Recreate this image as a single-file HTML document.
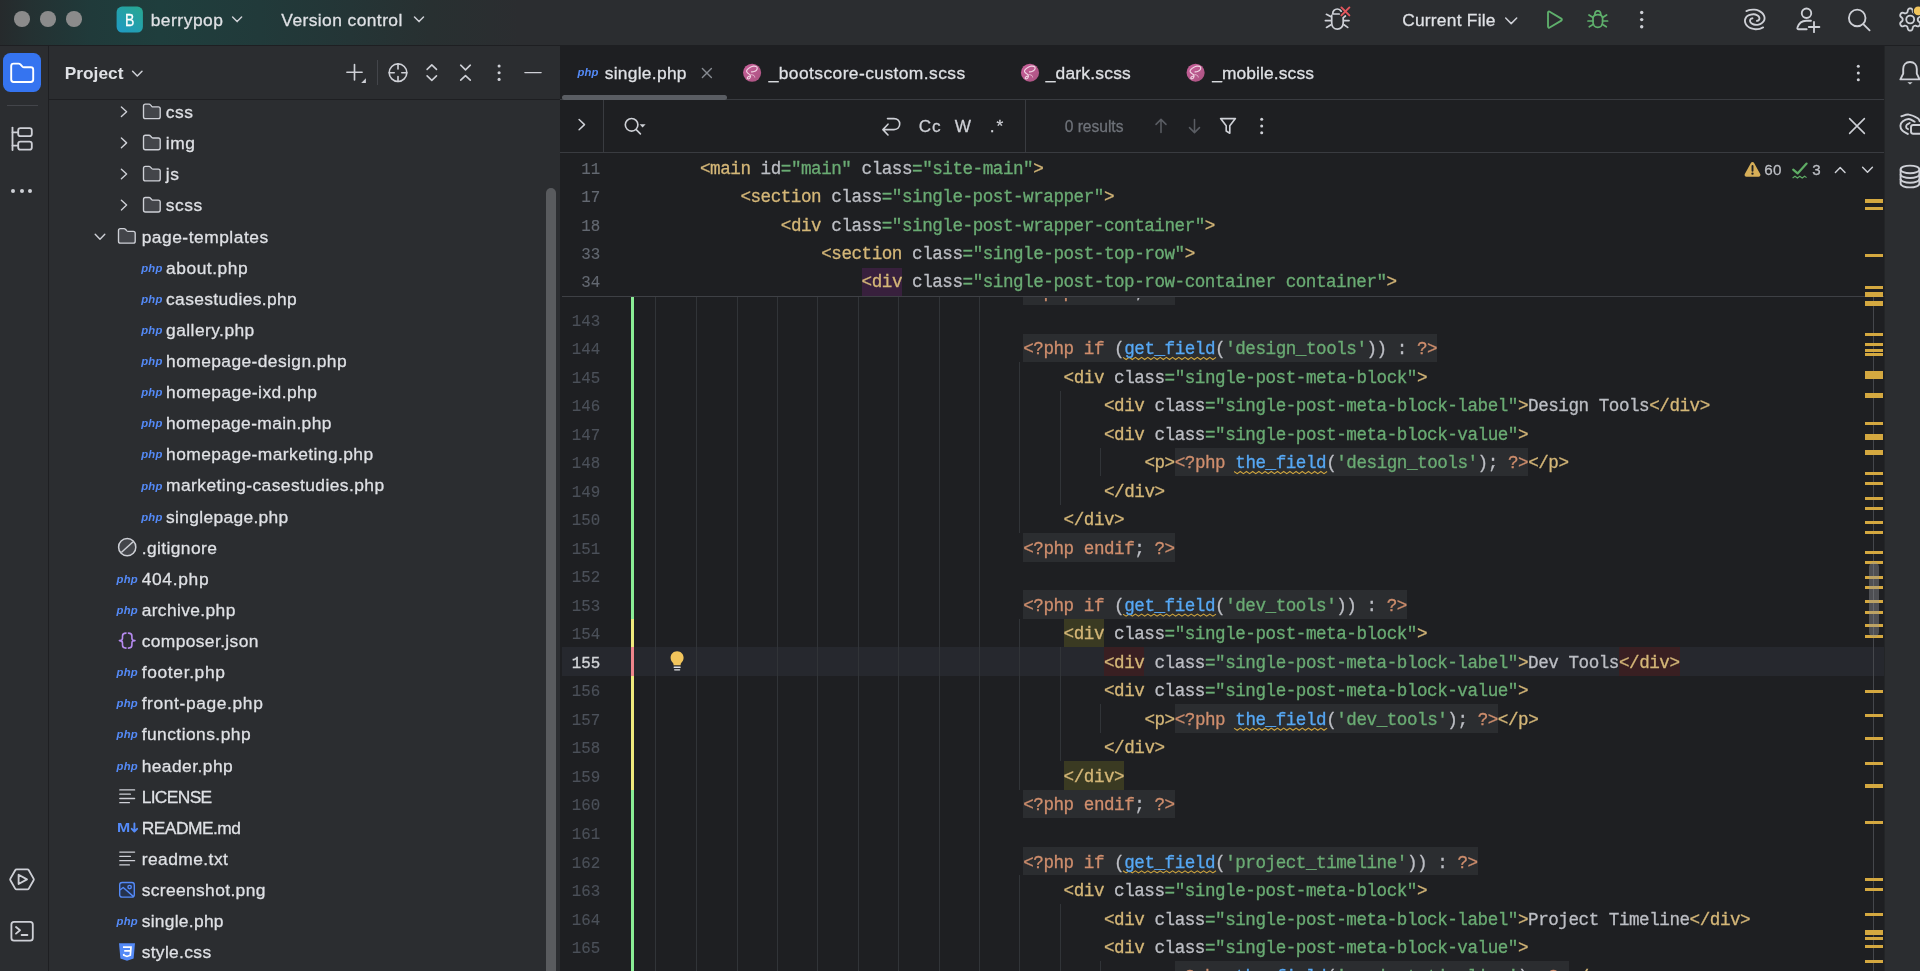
<!DOCTYPE html>
<html><head><meta charset="utf-8"><title>berrypop – single.php</title>
<style>
html,body{margin:0;padding:0;}
body{width:1920px;height:971px;overflow:hidden;background:#2b2d30;position:relative;font-family:"Liberation Sans",sans-serif;}
#root{position:absolute;left:0;top:0;width:1920px;height:971px;overflow:hidden;will-change:transform;}
.code span{white-space:pre}
</style></head><body><div id="root">
<div style="position:absolute;left:0px;top:0px;width:1920px;height:45px;background:#2b2d30;background-image:linear-gradient(90deg,#262a2c 0px,#243132 30px,#203a3a 90px,#1f3e3d 160px,#213a3a 260px,#243536 350px,#283031 430px,#2b2d30 520px);"></div>
<div style="position:absolute;left:0px;top:45px;width:1920px;height:1px;background:#1e1f22;"></div>
<div style="position:absolute;left:0px;top:46px;width:48px;height:925px;background:#2b2d30;"></div>
<div style="position:absolute;left:48px;top:46px;width:1px;height:925px;background:#1e1f22;"></div>
<div style="position:absolute;left:49px;top:46px;width:511px;height:925px;background:#2b2d30;"></div>
<div style="position:absolute;left:49px;top:99px;width:511px;height:1px;background:#1e1f22;"></div>
<div style="position:absolute;left:560px;top:46px;width:1324px;height:925px;background:#1e1f22;"></div>
<div style="position:absolute;left:1884px;top:46px;width:36px;height:925px;background:#2b2d30;"></div>
<div style="position:absolute;left:1884px;top:46px;width:1px;height:925px;background:#1e1f22;opacity:.6;"></div>
<div style="position:absolute;left:14.2px;top:11.399999999999999px;width:15.6px;height:15.6px;background:#8b8b8b;border-radius:50%;"></div>
<div style="position:absolute;left:40.0px;top:11.399999999999999px;width:15.6px;height:15.6px;background:#8b8b8b;border-radius:50%;"></div>
<div style="position:absolute;left:66.0px;top:11.399999999999999px;width:15.6px;height:15.6px;background:#8b8b8b;border-radius:50%;"></div>
<svg style="position:absolute;left:116px;top:6px;overflow:visible;" width="28" height="28" viewBox="0 0 28 28" fill="none"><g transform="translate(0.6 0.5)"><defs><linearGradient id="bg1" x1="0" y1="1" x2="0.8" y2="0"><stop offset="0" stop-color="#1f9ac6"/><stop offset="1" stop-color="#27a694"/></linearGradient></defs><rect x="0" y="0" width="26.3" height="26.1" rx="5.6" fill="url(#bg1)"/></g></svg>
<span style="position:absolute;left:125.27px;top:10.00px;line-height:21px;white-space:pre;font:normal normal 16.4px/21px 'Liberation Sans', sans-serif;color:#ffffff;-webkit-text-stroke:0.27px;transform:scaleX(.86);transform-origin:0 0;">B</span>
<span style="position:absolute;left:150.65px;top:9.00px;line-height:23px;white-space:pre;font:normal normal 17.4px/23px 'Liberation Sans', sans-serif;color:#dfe1e5;letter-spacing:0.531px;-webkit-text-stroke:0.27px;">berrypop</span>
<svg style="position:absolute;left:231px;top:16px;overflow:visible;" width="13" height="8" viewBox="0 0 13 8" fill="none"><g transform="translate(0.6 0.0)"><path d="M1 1 L5.5 5.6 L10 1" stroke="#ced0d6" stroke-width="1.5" stroke-linecap="round" stroke-linejoin="round"/></g></svg>
<span style="position:absolute;left:281.35px;top:9.00px;line-height:23px;white-space:pre;font:normal normal 17.4px/23px 'Liberation Sans', sans-serif;color:#dfe1e5;letter-spacing:0.423px;-webkit-text-stroke:0.27px;">Version control</span>
<svg style="position:absolute;left:413px;top:16px;overflow:visible;" width="13" height="8" viewBox="0 0 13 8" fill="none"><g transform="translate(0.5 0.0)"><path d="M1 1 L5.5 5.6 L10 1" stroke="#ced0d6" stroke-width="1.5" stroke-linecap="round" stroke-linejoin="round"/></g></svg>
<svg style="position:absolute;left:1323px;top:5px;overflow:visible;" width="31" height="28" viewBox="0 0 31 28" fill="none"><g transform="translate(0 0)"><g stroke="#ced0d6" stroke-width="1.73" stroke-linecap="round" fill="none"><path d="M8.7 10.4 V18 C8.7 21.6 11.2 24.1 14.4 24.1 C17.6 24.1 20.2 21.6 20.2 18 V13"/><path d="M9.7 9 C9.7 5.9 11.6 4 14.4 4 C16.2 4 17.4 4.8 18.2 6.2 M10.2 9 H16.2"/><path d="M3.4 9.3 L7.6 11.6 M2.4 15.6 H8.2 M3.5 22.4 L8 19.8 M21.2 15.6 H26 M21 19.8 L24.7 22.4 M20.4 12.6 L22.4 11"/></g><path d="M18.4 2.4 L26.4 10.4 M26.4 2.4 L18.4 10.4" stroke="#e5565d" stroke-width="1.9" stroke-linecap="round"/></g></svg>
<span style="position:absolute;left:1402.15px;top:9.00px;line-height:23px;white-space:pre;font:normal normal 17.4px/23px 'Liberation Sans', sans-serif;color:#dfe1e5;letter-spacing:0.229px;-webkit-text-stroke:0.27px;">Current File</span>
<svg style="position:absolute;left:1504px;top:17px;overflow:visible;" width="15" height="9" viewBox="0 0 15 9" fill="none"><g transform="translate(0.7 0.0)"><path d="M1 1 L6.5 6.6 L12 1" stroke="#ced0d6" stroke-width="1.5" stroke-linecap="round" stroke-linejoin="round"/></g></svg>
<svg style="position:absolute;left:1543px;top:8px;overflow:visible;" width="25" height="25" viewBox="0 0 25 25" fill="none"><g transform="translate(0 0)"><path d="M5 4.6 C5 3.7 5.9 3.2 6.7 3.7 L18.3 10.6 C19.1 11.1 19.1 12.1 18.3 12.6 L6.7 19.5 C5.9 20 5 19.5 5 18.6 Z" stroke="#5fb06c" stroke-width="1.83" stroke-linejoin="round"/></g></svg>
<svg style="position:absolute;left:1585px;top:7px;overflow:visible;" width="27" height="25" viewBox="0 0 27 25" fill="none"><g transform="translate(0 0)"><g stroke="#5fb06c" stroke-width="1.73" stroke-linecap="round" fill="none"><path d="M8 11.5 C8 8.8 10 7.6 12.8 7.6 C15.6 7.6 17.6 8.8 17.6 11.5 V15 C17.6 18.2 15.5 20.4 12.8 20.4 C10.1 20.4 8 18.2 8 15 Z"/><path d="M9.8 7.8 C9.8 5.3 11 3.8 12.8 3.8 C14.6 3.8 15.8 5.3 15.8 7.8"/><path d="M8 10.5 L4 8 M8 14 H3 M8.4 17.3 L4.3 19.8 M17.6 10.5 L21.6 8 M17.6 14 H22.6 M17.2 17.3 L21.3 19.8"/></g></g></svg>
<svg style="position:absolute;left:1638px;top:9px;overflow:visible;" width="8" height="22" viewBox="0 0 8 22" fill="none"><g transform="translate(0.7 0.5)"><circle cx="3" cy="3.0" r="1.7" fill="#ced0d6"/><circle cx="3" cy="10.1" r="1.7" fill="#ced0d6"/><circle cx="3" cy="17.2" r="1.7" fill="#ced0d6"/></g></svg>
<svg style="position:absolute;left:1742px;top:6px;overflow:visible;" width="29" height="29" viewBox="0 0 29 29" fill="none"><g transform="translate(0 0)"><g stroke="#ced0d6" stroke-width="1.85" stroke-linecap="round" fill="none"><path d="M4.33 5.02 C4.97 4.81 6.83 4.02 8.19 3.79 C9.56 3.56 11.13 3.50 12.52 3.63 C13.91 3.76 15.30 4.05 16.54 4.56 C17.77 5.08 19.00 5.85 19.93 6.72 C20.86 7.60 21.66 8.83 22.10 9.81 C22.54 10.79 22.61 11.71 22.56 12.59 C22.51 13.46 22.28 14.29 21.79 15.06 C21.30 15.83 20.49 16.64 19.62 17.23 C18.74 17.82 17.62 18.36 16.54 18.62 C15.46 18.88 14.17 18.90 13.14 18.77 C12.11 18.64 11.13 18.25 10.36 17.84 C9.59 17.43 8.89 16.87 8.50 16.30 C8.11 15.74 7.99 15.02 8.04 14.45 C8.09 13.88 8.40 13.26 8.81 12.90 C9.22 12.54 10.22 12.40 10.50 12.30"/><path d="M21.17 21.40 C20.60 21.63 19.06 22.48 17.77 22.79 C16.48 23.10 14.84 23.30 13.45 23.25 C12.06 23.20 10.67 22.92 9.43 22.48 C8.19 22.04 6.98 21.39 6.03 20.62 C5.08 19.85 4.24 18.82 3.72 17.84 C3.21 16.86 2.94 15.74 2.94 14.76 C2.94 13.78 3.26 12.79 3.72 11.97 C4.18 11.14 4.87 10.38 5.72 9.81 C6.57 9.25 7.78 8.84 8.81 8.58 C9.84 8.32 10.90 8.19 11.90 8.27 C12.91 8.35 14.02 8.65 14.84 9.04 C15.66 9.42 16.40 9.99 16.84 10.58 C17.28 11.17 17.51 11.97 17.46 12.59 C17.41 13.21 16.97 13.91 16.54 14.29 C16.11 14.67 15.17 14.76 14.90 14.85"/></g></g></svg>
<svg style="position:absolute;left:1794px;top:5px;overflow:visible;" width="29" height="31" viewBox="0 0 29 31" fill="none"><g transform="translate(0 0)"><g stroke="#ced0d6" stroke-width="1.83" stroke-linecap="round" stroke-linejoin="round" fill="none"><circle cx="12.5" cy="8.25" r="4.75"/><path d="M12.7 24.25 H4.6 C3.6 24.25 3 23.4 3.4 22.5 C4.8 18.6 8 15.75 12.2 15.75 H17"/><path d="M20 16.9 V27.2 M14.8 22 H25.4"/></g></g></svg>
<svg style="position:absolute;left:1845px;top:5px;overflow:visible;" width="29" height="29" viewBox="0 0 29 29" fill="none"><g transform="translate(0 0)"><g stroke="#ced0d6" stroke-width="1.83" stroke-linecap="round" fill="none"><circle cx="12.2" cy="12.95" r="8.3"/><path d="M18.3 19.1 L24.6 25.3"/></g></g></svg>
<svg style="position:absolute;left:1895px;top:4px;overflow:visible;" width="31" height="33" viewBox="0 0 31 33" fill="none"><g transform="translate(0 0)"><g stroke="#ced0d6" stroke-width="1.83" stroke-linejoin="round" fill="none"><circle cx="15.2" cy="15.5" r="3.95"/><path d="M22.75 15.50 C22.75 15.33 22.75 15.17 22.77 15.00 C22.80 14.83 22.80 14.67 22.89 14.49 C22.98 14.30 23.09 14.12 23.31 13.89 C23.52 13.66 23.90 13.38 24.18 13.09 C24.46 12.81 24.82 12.47 24.99 12.18 C25.16 11.89 25.20 11.61 25.22 11.35 C25.23 11.09 25.15 10.86 25.08 10.63 C25.00 10.40 24.89 10.18 24.77 9.98 C24.65 9.77 24.52 9.56 24.36 9.38 C24.19 9.20 24.03 9.02 23.80 8.90 C23.57 8.78 23.31 8.68 22.97 8.68 C22.63 8.69 22.16 8.82 21.78 8.92 C21.39 9.02 20.96 9.22 20.65 9.29 C20.34 9.36 20.13 9.36 19.92 9.34 C19.72 9.33 19.57 9.25 19.42 9.19 C19.26 9.13 19.12 9.04 18.98 8.96 C18.83 8.88 18.69 8.80 18.56 8.69 C18.42 8.59 18.29 8.50 18.17 8.33 C18.05 8.16 17.95 7.98 17.86 7.67 C17.76 7.37 17.71 6.90 17.61 6.52 C17.50 6.13 17.38 5.66 17.22 5.36 C17.05 5.07 16.83 4.89 16.62 4.75 C16.40 4.61 16.16 4.56 15.92 4.51 C15.68 4.46 15.44 4.45 15.20 4.45 C14.96 4.45 14.72 4.46 14.48 4.51 C14.24 4.56 14.00 4.61 13.78 4.75 C13.57 4.89 13.35 5.07 13.18 5.36 C13.02 5.66 12.90 6.13 12.79 6.52 C12.69 6.90 12.64 7.37 12.54 7.67 C12.45 7.98 12.35 8.16 12.23 8.33 C12.11 8.50 11.98 8.59 11.84 8.69 C11.71 8.80 11.57 8.88 11.43 8.96 C11.28 9.04 11.14 9.13 10.98 9.19 C10.83 9.25 10.68 9.33 10.48 9.34 C10.27 9.36 10.06 9.36 9.75 9.29 C9.44 9.22 9.01 9.02 8.62 8.92 C8.24 8.82 7.77 8.69 7.43 8.68 C7.09 8.68 6.83 8.78 6.60 8.90 C6.37 9.02 6.21 9.20 6.04 9.38 C5.88 9.56 5.75 9.77 5.63 9.98 C5.51 10.18 5.40 10.40 5.32 10.63 C5.25 10.86 5.17 11.09 5.18 11.35 C5.20 11.61 5.24 11.89 5.41 12.18 C5.58 12.47 5.94 12.81 6.22 13.09 C6.50 13.38 6.88 13.66 7.09 13.89 C7.31 14.12 7.42 14.30 7.51 14.49 C7.60 14.67 7.60 14.83 7.63 15.00 C7.65 15.17 7.65 15.33 7.65 15.50 C7.65 15.67 7.65 15.83 7.63 16.00 C7.60 16.17 7.60 16.33 7.51 16.51 C7.42 16.70 7.31 16.88 7.09 17.11 C6.88 17.34 6.50 17.62 6.22 17.91 C5.94 18.19 5.58 18.53 5.41 18.82 C5.24 19.11 5.20 19.39 5.18 19.65 C5.17 19.91 5.25 20.14 5.32 20.37 C5.40 20.60 5.51 20.82 5.63 21.02 C5.75 21.23 5.88 21.44 6.04 21.62 C6.21 21.80 6.37 21.98 6.60 22.10 C6.83 22.22 7.09 22.32 7.43 22.32 C7.77 22.31 8.24 22.18 8.62 22.08 C9.01 21.98 9.44 21.78 9.75 21.71 C10.06 21.64 10.27 21.64 10.48 21.66 C10.68 21.67 10.83 21.75 10.98 21.81 C11.14 21.87 11.28 21.96 11.42 22.04 C11.57 22.12 11.71 22.20 11.84 22.31 C11.98 22.41 12.11 22.50 12.23 22.67 C12.35 22.84 12.45 23.02 12.54 23.33 C12.64 23.63 12.69 24.10 12.79 24.48 C12.90 24.87 13.02 25.34 13.18 25.64 C13.35 25.93 13.57 26.11 13.78 26.25 C14.00 26.39 14.24 26.44 14.48 26.49 C14.72 26.54 14.96 26.55 15.20 26.55 C15.44 26.55 15.68 26.54 15.92 26.49 C16.16 26.44 16.40 26.39 16.62 26.25 C16.83 26.11 17.05 25.93 17.22 25.64 C17.38 25.34 17.50 24.87 17.61 24.48 C17.71 24.10 17.76 23.63 17.86 23.33 C17.95 23.02 18.05 22.84 18.17 22.67 C18.29 22.50 18.42 22.41 18.56 22.31 C18.69 22.20 18.83 22.12 18.98 22.04 C19.12 21.96 19.26 21.87 19.42 21.81 C19.57 21.75 19.72 21.67 19.92 21.66 C20.13 21.64 20.34 21.64 20.65 21.71 C20.96 21.78 21.39 21.98 21.78 22.08 C22.16 22.18 22.63 22.31 22.97 22.32 C23.31 22.32 23.57 22.22 23.80 22.10 C24.03 21.98 24.19 21.80 24.36 21.62 C24.52 21.44 24.65 21.23 24.77 21.03 C24.89 20.82 25.00 20.60 25.08 20.37 C25.15 20.14 25.23 19.91 25.22 19.65 C25.20 19.39 25.16 19.11 24.99 18.82 C24.82 18.53 24.46 18.19 24.18 17.91 C23.90 17.62 23.52 17.34 23.31 17.11 C23.09 16.88 22.98 16.70 22.89 16.51 C22.80 16.33 22.80 16.17 22.77 16.00 C22.75 15.83 22.75 15.67 22.75 15.50 Z"/></g><circle cx="23.2" cy="6.9" r="5.5" fill="#2b2d30"/><circle cx="23.2" cy="6.9" r="4.4" fill="#f2c55c"/></g></svg>
<div style="position:absolute;left:3px;top:53px;width:38px;height:39px;background:#3574f0;border-radius:7.5px;"></div>
<svg style="position:absolute;left:8px;top:60px;overflow:visible;" width="29" height="26" viewBox="0 0 29 26" fill="none"><g transform="translate(0 0)"><path d="M3.2 6 C3.2 4.6 4.2 3.6 5.6 3.6 H10.6 C11.3 3.6 11.9 3.9 12.4 4.4 L14.4 6.6 C14.8 7 15.4 7.3 16 7.3 H22.8 C24.2 7.3 25.2 8.3 25.2 9.7 V19.6 C25.2 21 24.2 22 22.8 22 H5.6 C4.2 22 3.2 21 3.2 19.6 Z" stroke="#ffffff" stroke-width="1.9" stroke-linejoin="round"/></g></svg>
<div style="position:absolute;left:7px;top:105px;width:31px;height:1px;background:#43454a;"></div>
<svg style="position:absolute;left:9px;top:125px;overflow:visible;" width="27" height="29" viewBox="0 0 27 29" fill="none"><g transform="translate(0 0)"><g stroke="#ced0d6" stroke-width="1.83" fill="none" stroke-linecap="round"><path d="M3.5 2.6 V25"/><rect x="9.2" y="3.2" width="13.6" height="8" rx="2.2"/><rect x="9.2" y="16.6" width="13.6" height="8" rx="2.2"/><path d="M3.5 7.3 H9 M3.5 20.6 H9"/></g></g></svg>
<div style="position:absolute;left:11.3px;top:188.9px;width:4px;height:4px;background:#ced0d6;border-radius:50%;"></div>
<div style="position:absolute;left:19.9px;top:188.9px;width:4px;height:4px;background:#ced0d6;border-radius:50%;"></div>
<div style="position:absolute;left:28.4px;top:188.9px;width:4px;height:4px;background:#ced0d6;border-radius:50%;"></div>
<svg style="position:absolute;left:7px;top:866px;overflow:visible;" width="31" height="28" viewBox="0 0 31 28" fill="none"><g transform="translate(0 0)"><g stroke="#ced0d6" stroke-width="1.83" stroke-linejoin="round" fill="none"><path d="M9.6 3.4 H20.4 C21 3.4 21.5 3.7 21.8 4.2 L26.6 12.6 C26.9 13.1 26.9 13.7 26.6 14.2 L21.8 22.6 C21.5 23.1 21 23.4 20.4 23.4 H9.6 C9 23.4 8.5 23.1 8.2 22.6 L3.4 14.2 C3.1 13.7 3.1 13.1 3.4 12.6 L8.2 4.2 C8.5 3.7 9 3.4 9.6 3.4 Z"/><path d="M11.6 8.8 V18 L20 13.4 Z"/></g></g></svg>
<svg style="position:absolute;left:8px;top:918px;overflow:visible;" width="29" height="27" viewBox="0 0 29 27" fill="none"><g transform="translate(0 0)"><g stroke="#ced0d6" stroke-width="1.83" stroke-linecap="round" stroke-linejoin="round" fill="none"><rect x="3.4" y="3.8" width="21.4" height="18.8" rx="2.6"/><path d="M8 9 L12 12.3 L8 15.6 M13.6 17 H19.4"/></g></g></svg>
<span style="position:absolute;left:64.65px;top:62.00px;line-height:22px;white-space:pre;font:normal bold 17.3px/22px 'Liberation Sans', sans-serif;color:#dfe1e5;letter-spacing:0.041px;">Project</span>
<svg style="position:absolute;left:131px;top:70px;overflow:visible;" width="13" height="8" viewBox="0 0 13 8" fill="none"><g transform="translate(0.6 0.2)"><path d="M1 1 L5.7 5.8 L10.4 1" stroke="#ced0d6" stroke-width="1.5" stroke-linecap="round" stroke-linejoin="round"/></g></svg>
<svg style="position:absolute;left:344px;top:62px;overflow:visible;" width="25" height="24" viewBox="0 0 25 24" fill="none"><g transform="translate(0 0)"><path d="M10.5 2.6 V17.9 M2.9 10.2 H18.1" stroke="#ced0d6" stroke-width="1.65" stroke-linecap="round"/><path d="M21.9 16.2 V20.9 H17.2 Z" fill="#ced0d6"/></g></svg>
<div style="position:absolute;left:377px;top:60px;width:1px;height:25px;background:#43454a;"></div>
<svg style="position:absolute;left:386px;top:60px;overflow:visible;" width="25" height="26" viewBox="0 0 25 26" fill="none"><g transform="translate(0 0.7)"><g stroke="#ced0d6" stroke-width="1.63" stroke-linecap="round" fill="none"><circle cx="12" cy="12" r="8.8"/><path d="M12 3.2 V8.2 M12 15.8 V20.8 M3.2 12 H8.2 M15.8 12 H20.8"/></g></g></svg>
<svg style="position:absolute;left:423px;top:62px;overflow:visible;" width="18" height="22" viewBox="0 0 18 22" fill="none"><g transform="translate(0 0)"><path d="M4.1 7.4 L8.8 2.9 L13.5 7.4 M4.1 13.9 L8.8 18.4 L13.5 13.9" stroke="#ced0d6" stroke-width="1.6" stroke-linecap="round" stroke-linejoin="round"/></g></svg>
<svg style="position:absolute;left:456px;top:62px;overflow:visible;" width="19" height="22" viewBox="0 0 19 22" fill="none"><g transform="translate(0.8 0)"><path d="M3.9 3.2 L8.7 7.8 L13.5 3.2 M3.9 18.2 L8.7 13.6 L13.5 18.2" stroke="#ced0d6" stroke-width="1.6" stroke-linecap="round" stroke-linejoin="round"/></g></svg>
<svg style="position:absolute;left:496px;top:63px;overflow:visible;" width="8" height="21" viewBox="0 0 8 21" fill="none"><g transform="translate(0.1 0.0)"><circle cx="3" cy="3.0" r="1.55" fill="#ced0d6"/><circle cx="3" cy="9.7" r="1.55" fill="#ced0d6"/><circle cx="3" cy="16.4" r="1.55" fill="#ced0d6"/></g></svg>
<svg style="position:absolute;left:523px;top:70px;overflow:visible;" width="21" height="6" viewBox="0 0 21 6" fill="none"><g transform="translate(0 0)"><path d="M1.9 2.6 H18.1" stroke="#ced0d6" stroke-width="1.45" stroke-linecap="round"/></g></svg>
<div style="position:absolute;left:560px;top:99px;width:1324px;height:1px;background:#393b40;"></div>
<div style="position:absolute;left:562px;top:94.7px;width:165px;height:5px;background:#5a5d63;border-radius:3px;"></div>
<span style="position:absolute;left:577.47px;top:65.00px;line-height:15px;white-space:pre;font:italic bold 11.3px/15px 'Liberation Sans', sans-serif;color:#548af7;letter-spacing:0.167px;">php</span>
<span style="position:absolute;left:604.65px;top:62.00px;line-height:23px;white-space:pre;font:normal normal 17.4px/23px 'Liberation Sans', sans-serif;color:#dfe1e5;letter-spacing:0.290px;-webkit-text-stroke:0.27px;">single.php</span>
<svg style="position:absolute;left:700px;top:66px;overflow:visible;" width="15" height="15" viewBox="0 0 15 15" fill="none"><g transform="translate(0 0)"><path d="M2.4 2.4 L11.4 11.4 M11.4 2.4 L2.4 11.4" stroke="#868a91" stroke-width="1.43" stroke-linecap="round"/></g></svg>
<svg style="position:absolute;left:742px;top:63px;overflow:visible;" width="21" height="21" viewBox="0 0 21 21" fill="none"><g transform="translate(0.6 0.25)"><defs><linearGradient id="sg752" x1="0" y1="0" x2="1" y2="1"><stop offset="0" stop-color="#c8609a"/><stop offset="1" stop-color="#aa5381"/></linearGradient></defs><circle cx="9.5" cy="9.5" r="9.05" fill="url(#sg752)"/><path d="M8.98 8.64 C9.39 8.59 10.63 8.64 11.45 8.33 C12.27 8.02 13.39 7.43 13.92 6.79 C14.45 6.15 14.69 5.10 14.60 4.50 C14.51 3.90 14.03 3.46 13.40 3.20 C12.77 2.94 11.77 2.80 10.83 2.93 C9.89 3.06 8.78 3.42 7.75 4.01 C6.72 4.60 5.28 5.76 4.66 6.48 C4.04 7.20 3.89 7.71 4.04 8.33 C4.20 8.95 4.97 9.56 5.59 10.18 C6.21 10.80 7.44 11.31 7.75 12.03 C8.06 12.75 7.80 13.88 7.44 14.50 C7.08 15.12 6.05 15.69 5.59 15.74 C5.13 15.79 4.61 15.22 4.66 14.81 C4.71 14.40 5.39 13.63 5.90 13.27 C6.42 12.91 7.44 12.75 7.75 12.65" stroke="#f1d6e4" stroke-width="1.15" stroke-linecap="round" fill="none"/><path d="M7.90 12.10 C8.08 11.99 8.39 11.38 8.98 11.42 C9.57 11.46 10.93 11.93 11.45 12.34 C11.96 12.75 11.97 13.63 12.07 13.89" stroke="#e6b9d0" stroke-width="1.0" stroke-linecap="round" fill="none"/></g></svg>
<span style="position:absolute;left:768.65px;top:62.00px;line-height:23px;white-space:pre;font:normal normal 17.4px/23px 'Liberation Sans', sans-serif;color:#dfe1e5;letter-spacing:0.426px;-webkit-text-stroke:0.27px;">_bootscore-custom.scss</span>
<svg style="position:absolute;left:1020px;top:63px;overflow:visible;" width="21" height="21" viewBox="0 0 21 21" fill="none"><g transform="translate(0.5 0.2)"><defs><linearGradient id="sg1030" x1="0" y1="0" x2="1" y2="1"><stop offset="0" stop-color="#c8609a"/><stop offset="1" stop-color="#aa5381"/></linearGradient></defs><circle cx="9.5" cy="9.5" r="9.05" fill="url(#sg1030)"/><path d="M8.98 8.64 C9.39 8.59 10.63 8.64 11.45 8.33 C12.27 8.02 13.39 7.43 13.92 6.79 C14.45 6.15 14.69 5.10 14.60 4.50 C14.51 3.90 14.03 3.46 13.40 3.20 C12.77 2.94 11.77 2.80 10.83 2.93 C9.89 3.06 8.78 3.42 7.75 4.01 C6.72 4.60 5.28 5.76 4.66 6.48 C4.04 7.20 3.89 7.71 4.04 8.33 C4.20 8.95 4.97 9.56 5.59 10.18 C6.21 10.80 7.44 11.31 7.75 12.03 C8.06 12.75 7.80 13.88 7.44 14.50 C7.08 15.12 6.05 15.69 5.59 15.74 C5.13 15.79 4.61 15.22 4.66 14.81 C4.71 14.40 5.39 13.63 5.90 13.27 C6.42 12.91 7.44 12.75 7.75 12.65" stroke="#f1d6e4" stroke-width="1.15" stroke-linecap="round" fill="none"/><path d="M7.90 12.10 C8.08 11.99 8.39 11.38 8.98 11.42 C9.57 11.46 10.93 11.93 11.45 12.34 C11.96 12.75 11.97 13.63 12.07 13.89" stroke="#e6b9d0" stroke-width="1.0" stroke-linecap="round" fill="none"/></g></svg>
<span style="position:absolute;left:1045.65px;top:62.00px;line-height:23px;white-space:pre;font:normal normal 17.4px/23px 'Liberation Sans', sans-serif;color:#dfe1e5;letter-spacing:0.227px;-webkit-text-stroke:0.27px;">_dark.scss</span>
<svg style="position:absolute;left:1186px;top:63px;overflow:visible;" width="21" height="21" viewBox="0 0 21 21" fill="none"><g transform="translate(0.1 0.2)"><defs><linearGradient id="sg1195" x1="0" y1="0" x2="1" y2="1"><stop offset="0" stop-color="#c8609a"/><stop offset="1" stop-color="#aa5381"/></linearGradient></defs><circle cx="9.5" cy="9.5" r="9.05" fill="url(#sg1195)"/><path d="M8.98 8.64 C9.39 8.59 10.63 8.64 11.45 8.33 C12.27 8.02 13.39 7.43 13.92 6.79 C14.45 6.15 14.69 5.10 14.60 4.50 C14.51 3.90 14.03 3.46 13.40 3.20 C12.77 2.94 11.77 2.80 10.83 2.93 C9.89 3.06 8.78 3.42 7.75 4.01 C6.72 4.60 5.28 5.76 4.66 6.48 C4.04 7.20 3.89 7.71 4.04 8.33 C4.20 8.95 4.97 9.56 5.59 10.18 C6.21 10.80 7.44 11.31 7.75 12.03 C8.06 12.75 7.80 13.88 7.44 14.50 C7.08 15.12 6.05 15.69 5.59 15.74 C5.13 15.79 4.61 15.22 4.66 14.81 C4.71 14.40 5.39 13.63 5.90 13.27 C6.42 12.91 7.44 12.75 7.75 12.65" stroke="#f1d6e4" stroke-width="1.15" stroke-linecap="round" fill="none"/><path d="M7.90 12.10 C8.08 11.99 8.39 11.38 8.98 11.42 C9.57 11.46 10.93 11.93 11.45 12.34 C11.96 12.75 11.97 13.63 12.07 13.89" stroke="#e6b9d0" stroke-width="1.0" stroke-linecap="round" fill="none"/></g></svg>
<span style="position:absolute;left:1212.15px;top:62.00px;line-height:23px;white-space:pre;font:normal normal 17.4px/23px 'Liberation Sans', sans-serif;color:#dfe1e5;letter-spacing:0.115px;-webkit-text-stroke:0.27px;">_mobile.scss</span>
<svg style="position:absolute;left:1855px;top:63px;overflow:visible;" width="8" height="21" viewBox="0 0 8 21" fill="none"><g transform="translate(0.3 0.3)"><circle cx="3" cy="3.0" r="1.5" fill="#ced0d6"/><circle cx="3" cy="9.7" r="1.5" fill="#ced0d6"/><circle cx="3" cy="16.4" r="1.5" fill="#ced0d6"/></g></svg>
<div style="position:absolute;left:560px;top:151.5px;width:1324px;height:1.2px;background:#393b40;"></div>
<svg style="position:absolute;left:578px;top:118px;overflow:visible;" width="9" height="14" viewBox="0 0 9 14" fill="none"><g transform="translate(0.1 0.5)"><path d="M1 1 L6.4 6.1 L1 11.2" stroke="#ced0d6" stroke-width="1.5" stroke-linecap="round" stroke-linejoin="round"/></g></svg>
<div style="position:absolute;left:603.3px;top:100px;width:1px;height:52px;background:#393b40;"></div>
<svg style="position:absolute;left:622px;top:116px;overflow:visible;" width="29" height="21" viewBox="0 0 29 21" fill="none"><g transform="translate(0 0)"><g stroke="#ced0d6" stroke-width="1.63" stroke-linecap="round" fill="none"><circle cx="9.6" cy="8.8" r="6.3"/><path d="M14.2 13.6 L18.4 17.8"/></g><path d="M17.6 8.2 H23.6 L20.6 11.6 Z" fill="#ced0d6"/></g></svg>
<svg style="position:absolute;left:880px;top:117px;overflow:visible;" width="24" height="22" viewBox="0 0 24 22" fill="none"><g transform="translate(0 0)"><path d="M7.5 1.6 H14 C17.5 1.6 19.7 4 19.7 7.1 C19.7 10.2 17.5 12.6 14 12.6 H3.4 M8 7.2 L2.9 12.6 L8 18" stroke="#ced0d6" stroke-width="1.6" stroke-linecap="round" stroke-linejoin="round"/></g></svg>
<span style="position:absolute;left:918.66px;top:115.00px;line-height:22px;white-space:pre;font:normal normal 17.2px/22px 'Liberation Sans', sans-serif;color:#ced0d6;letter-spacing:0.930px;-webkit-text-stroke:0.27px;">Cc</span>
<span style="position:absolute;left:954.66px;top:115.00px;line-height:22px;white-space:pre;font:normal normal 17.2px/22px 'Liberation Sans', sans-serif;color:#ced0d6;letter-spacing:1.842px;-webkit-text-stroke:0.27px;">W</span>
<span style="position:absolute;left:989.65px;top:115.00px;line-height:23px;white-space:pre;font:normal normal 17.4px/23px 'Liberation Sans', sans-serif;color:#ced0d6;letter-spacing:2.141px;-webkit-text-stroke:0.27px;">.*</span>
<div style="position:absolute;left:1025px;top:100px;width:1px;height:52px;background:#393b40;"></div>
<span style="position:absolute;left:1064.69px;top:117.00px;line-height:20px;white-space:pre;font:normal normal 15.6px/20px 'Liberation Sans', sans-serif;color:#6f737a;letter-spacing:-0.021px;-webkit-text-stroke:0.27px;">0 results</span>
<svg style="position:absolute;left:1154px;top:117px;overflow:visible;" width="15" height="19" viewBox="0 0 15 19" fill="none"><g transform="translate(0 0)"><path d="M7 15.6 V2.6 M2 7.4 L7 2.4 L12 7.4" stroke="#5a5d63" stroke-width="1.53" stroke-linecap="round" stroke-linejoin="round"/></g></svg>
<svg style="position:absolute;left:1187px;top:117px;overflow:visible;" width="16" height="19" viewBox="0 0 16 19" fill="none"><g transform="translate(0.5 0)"><path d="M7 2.4 V15.4 M2 10.6 L7 15.6 L12 10.6" stroke="#5a5d63" stroke-width="1.53" stroke-linecap="round" stroke-linejoin="round"/></g></svg>
<svg style="position:absolute;left:1218px;top:116px;overflow:visible;" width="21" height="21" viewBox="0 0 21 21" fill="none"><g transform="translate(0 0)"><path d="M2.6 2.6 H17.4 L11.8 9.8 V17.2 L8.2 15 V9.8 Z" stroke="#ced0d6" stroke-width="1.63" stroke-linejoin="round"/></g></svg>
<svg style="position:absolute;left:1258px;top:116px;overflow:visible;" width="8" height="21" viewBox="0 0 8 21" fill="none"><g transform="translate(0.7 0.3)"><circle cx="3" cy="3.0" r="1.5" fill="#ced0d6"/><circle cx="3" cy="9.7" r="1.5" fill="#ced0d6"/><circle cx="3" cy="16.4" r="1.5" fill="#ced0d6"/></g></svg>
<svg style="position:absolute;left:1847px;top:116px;overflow:visible;" width="21" height="21" viewBox="0 0 21 21" fill="none"><g transform="translate(0 0)"><path d="M2.6 2.6 L17.4 17.4 M17.4 2.6 L2.6 17.4" stroke="#ced0d6" stroke-width="1.53" stroke-linecap="round"/></g></svg>
<svg style="position:absolute;left:1897px;top:59px;overflow:visible;" width="27" height="29" viewBox="0 0 27 29" fill="none"><g transform="translate(0 0)"><g stroke="#ced0d6" stroke-width="1.9" stroke-linejoin="round" fill="none"><path d="M13 3 C8.6 3 6.2 6.2 6.2 10 V14.6 L3.4 20.4 H22.6 L19.8 14.6 V10 C19.8 6.2 17.4 3 13 3 Z"/></g><path d="M10.4 23.2 H15.6 L13 25.6 Z" fill="#ced0d6"/></g></svg>
<svg style="position:absolute;left:1897px;top:111px;overflow:visible;" width="27" height="29" viewBox="0 0 27 29" fill="none"><g transform="translate(0 0)"><g stroke="#ced0d6" stroke-width="1.9" stroke-linecap="round" fill="none"><path d="M4.40 5.30 C5.63 5.02 9.08 3.27 11.80 3.60 C14.52 3.93 18.88 6.18 20.70 7.30 C22.52 8.42 22.37 9.80 22.70 10.30"/><path d="M17.70 10.80 C16.72 10.33 13.77 8.08 11.80 8.00 C9.83 7.92 7.30 9.18 5.90 10.30 C4.50 11.42 3.48 13.13 3.40 14.70 C3.32 16.27 4.17 18.33 5.40 19.70 C6.63 21.07 9.90 22.37 10.80 22.90"/><path d="M12.80 12.00 C12.30 12.30 10.38 13.02 9.80 13.80 C9.22 14.58 9.05 15.97 9.30 16.70 C9.55 17.43 10.97 17.95 11.30 18.20"/></g><rect x="14" y="14" width="16" height="8.8" rx="2.2" fill="#2b2d30" stroke="#2b2d30" stroke-width="4.4"/><rect x="14" y="14" width="16" height="8.8" rx="2.2" fill="none" stroke="#ced0d6" stroke-width="1.9"/></g></svg>
<svg style="position:absolute;left:1897px;top:163px;overflow:visible;" width="27" height="29" viewBox="0 0 27 29" fill="none"><g transform="translate(0 0)"><g stroke="#ced0d6" stroke-width="1.9" fill="none"><ellipse cx="13" cy="6.4" rx="9.4" ry="3.8"/><path d="M3.6 6.4 V20.6 C3.6 22.7 7.8 24.4 13 24.4 C18.2 24.4 22.4 22.7 22.4 20.6 V6.4"/><path d="M3.6 11.2 C3.6 13.3 7.8 15 13 15 C18.2 15 22.4 13.3 22.4 11.2 M3.6 16 C3.6 18.1 7.8 19.8 13 19.8 C18.2 19.8 22.4 18.1 22.4 16"/></g></g></svg>
<svg style="position:absolute;left:120px;top:105px;overflow:visible;" width="9" height="14" viewBox="0 0 9 14" fill="none"><g transform="translate(0.4 0.95)"><path d="M1 1 L6.2 5.8 L1 10.6" stroke="#ced0d6" stroke-width="1.4" stroke-linecap="round" stroke-linejoin="round"/></g></svg>
<svg style="position:absolute;left:141px;top:102px;overflow:visible;" width="23" height="21" viewBox="0 0 23 21" fill="none"><g transform="translate(0.7 0.05)"><path d="M1.8 4 C1.8 2.9 2.6 2.1 3.7 2.1 H7.3 C7.9 2.1 8.4 2.3 8.8 2.8 L9.9 4.1 C10.3 4.5 10.8 4.8 11.4 4.8 H16.6 C17.7 4.8 18.5 5.6 18.5 6.7 V14.7 C18.5 15.8 17.7 16.6 16.6 16.6 H3.7 C2.6 16.6 1.8 15.8 1.8 14.7 Z" fill="#43454a" stroke="#ced0d6" stroke-width="1.35" stroke-linejoin="round"/></g></svg>
<span style="position:absolute;left:165.75px;top:101.00px;line-height:23px;white-space:pre;font:normal normal 17.4px/23px 'Liberation Sans', sans-serif;color:#dfe1e5;letter-spacing:0.566px;-webkit-text-stroke:0.27px;">css</span>
<svg style="position:absolute;left:120px;top:137px;overflow:visible;" width="9" height="13" viewBox="0 0 9 13" fill="none"><g transform="translate(0.4 0.065)"><path d="M1 1 L6.2 5.8 L1 10.6" stroke="#ced0d6" stroke-width="1.4" stroke-linecap="round" stroke-linejoin="round"/></g></svg>
<svg style="position:absolute;left:141px;top:133px;overflow:visible;" width="23" height="21" viewBox="0 0 23 21" fill="none"><g transform="translate(0.7 0.165)"><path d="M1.8 4 C1.8 2.9 2.6 2.1 3.7 2.1 H7.3 C7.9 2.1 8.4 2.3 8.8 2.8 L9.9 4.1 C10.3 4.5 10.8 4.8 11.4 4.8 H16.6 C17.7 4.8 18.5 5.6 18.5 6.7 V14.7 C18.5 15.8 17.7 16.6 16.6 16.6 H3.7 C2.6 16.6 1.8 15.8 1.8 14.7 Z" fill="#43454a" stroke="#ced0d6" stroke-width="1.35" stroke-linejoin="round"/></g></svg>
<span style="position:absolute;left:165.75px;top:132.00px;line-height:23px;white-space:pre;font:normal normal 17.4px/23px 'Liberation Sans', sans-serif;color:#dfe1e5;letter-spacing:0.520px;-webkit-text-stroke:0.27px;">img</span>
<svg style="position:absolute;left:120px;top:168px;overflow:visible;" width="9" height="13" viewBox="0 0 9 13" fill="none"><g transform="translate(0.4 0.18)"><path d="M1 1 L6.2 5.8 L1 10.6" stroke="#ced0d6" stroke-width="1.4" stroke-linecap="round" stroke-linejoin="round"/></g></svg>
<svg style="position:absolute;left:141px;top:164px;overflow:visible;" width="23" height="21" viewBox="0 0 23 21" fill="none"><g transform="translate(0.7 0.28)"><path d="M1.8 4 C1.8 2.9 2.6 2.1 3.7 2.1 H7.3 C7.9 2.1 8.4 2.3 8.8 2.8 L9.9 4.1 C10.3 4.5 10.8 4.8 11.4 4.8 H16.6 C17.7 4.8 18.5 5.6 18.5 6.7 V14.7 C18.5 15.8 17.7 16.6 16.6 16.6 H3.7 C2.6 16.6 1.8 15.8 1.8 14.7 Z" fill="#43454a" stroke="#ced0d6" stroke-width="1.35" stroke-linejoin="round"/></g></svg>
<span style="position:absolute;left:165.75px;top:163.00px;line-height:23px;white-space:pre;font:normal normal 17.4px/23px 'Liberation Sans', sans-serif;color:#dfe1e5;letter-spacing:0.615px;-webkit-text-stroke:0.27px;">js</span>
<svg style="position:absolute;left:120px;top:199px;overflow:visible;" width="9" height="13" viewBox="0 0 9 13" fill="none"><g transform="translate(0.4 0.295)"><path d="M1 1 L6.2 5.8 L1 10.6" stroke="#ced0d6" stroke-width="1.4" stroke-linecap="round" stroke-linejoin="round"/></g></svg>
<svg style="position:absolute;left:141px;top:195px;overflow:visible;" width="23" height="21" viewBox="0 0 23 21" fill="none"><g transform="translate(0.7 0.395)"><path d="M1.8 4 C1.8 2.9 2.6 2.1 3.7 2.1 H7.3 C7.9 2.1 8.4 2.3 8.8 2.8 L9.9 4.1 C10.3 4.5 10.8 4.8 11.4 4.8 H16.6 C17.7 4.8 18.5 5.6 18.5 6.7 V14.7 C18.5 15.8 17.7 16.6 16.6 16.6 H3.7 C2.6 16.6 1.8 15.8 1.8 14.7 Z" fill="#43454a" stroke="#ced0d6" stroke-width="1.35" stroke-linejoin="round"/></g></svg>
<span style="position:absolute;left:165.75px;top:194.00px;line-height:23px;white-space:pre;font:normal normal 17.4px/23px 'Liberation Sans', sans-serif;color:#dfe1e5;letter-spacing:0.528px;-webkit-text-stroke:0.27px;">scss</span>
<svg style="position:absolute;left:94px;top:233px;overflow:visible;" width="13" height="9" viewBox="0 0 13 9" fill="none"><g transform="translate(0.2 0.21)"><path d="M1 1 L5.8 6 L10.6 1" stroke="#ced0d6" stroke-width="1.4" stroke-linecap="round" stroke-linejoin="round"/></g></svg>
<svg style="position:absolute;left:116px;top:226px;overflow:visible;" width="23" height="21" viewBox="0 0 23 21" fill="none"><g transform="translate(0.7 0.51)"><path d="M1.8 4 C1.8 2.9 2.6 2.1 3.7 2.1 H7.3 C7.9 2.1 8.4 2.3 8.8 2.8 L9.9 4.1 C10.3 4.5 10.8 4.8 11.4 4.8 H16.6 C17.7 4.8 18.5 5.6 18.5 6.7 V14.7 C18.5 15.8 17.7 16.6 16.6 16.6 H3.7 C2.6 16.6 1.8 15.8 1.8 14.7 Z" fill="#43454a" stroke="#ced0d6" stroke-width="1.35" stroke-linejoin="round"/></g></svg>
<span style="position:absolute;left:141.65px;top:226.00px;line-height:23px;white-space:pre;font:normal normal 17.4px/23px 'Liberation Sans', sans-serif;color:#dfe1e5;letter-spacing:0.508px;-webkit-text-stroke:0.27px;">page-templates</span>
<span style="position:absolute;left:141.27px;top:261.00px;line-height:15px;white-space:pre;font:italic bold 11.3px/15px 'Liberation Sans', sans-serif;color:#548af7;letter-spacing:0.167px;">php</span>
<span style="position:absolute;left:166.05px;top:257.00px;line-height:23px;white-space:pre;font:normal normal 17.4px/23px 'Liberation Sans', sans-serif;color:#dfe1e5;letter-spacing:0.524px;-webkit-text-stroke:0.27px;">about.php</span>
<span style="position:absolute;left:141.27px;top:292.00px;line-height:15px;white-space:pre;font:italic bold 11.3px/15px 'Liberation Sans', sans-serif;color:#548af7;letter-spacing:0.167px;">php</span>
<span style="position:absolute;left:166.05px;top:288.00px;line-height:23px;white-space:pre;font:normal normal 17.4px/23px 'Liberation Sans', sans-serif;color:#dfe1e5;letter-spacing:0.360px;-webkit-text-stroke:0.27px;">casestudies.php</span>
<span style="position:absolute;left:141.27px;top:323.00px;line-height:15px;white-space:pre;font:italic bold 11.3px/15px 'Liberation Sans', sans-serif;color:#548af7;letter-spacing:0.167px;">php</span>
<span style="position:absolute;left:166.05px;top:319.00px;line-height:23px;white-space:pre;font:normal normal 17.4px/23px 'Liberation Sans', sans-serif;color:#dfe1e5;letter-spacing:0.445px;-webkit-text-stroke:0.27px;">gallery.php</span>
<span style="position:absolute;left:141.27px;top:354.00px;line-height:15px;white-space:pre;font:italic bold 11.3px/15px 'Liberation Sans', sans-serif;color:#548af7;letter-spacing:0.167px;">php</span>
<span style="position:absolute;left:166.05px;top:350.00px;line-height:23px;white-space:pre;font:normal normal 17.4px/23px 'Liberation Sans', sans-serif;color:#dfe1e5;letter-spacing:0.417px;-webkit-text-stroke:0.27px;">homepage-design.php</span>
<span style="position:absolute;left:141.27px;top:385.00px;line-height:15px;white-space:pre;font:italic bold 11.3px/15px 'Liberation Sans', sans-serif;color:#548af7;letter-spacing:0.167px;">php</span>
<span style="position:absolute;left:166.05px;top:381.00px;line-height:23px;white-space:pre;font:normal normal 17.4px/23px 'Liberation Sans', sans-serif;color:#dfe1e5;letter-spacing:0.452px;-webkit-text-stroke:0.27px;">homepage-ixd.php</span>
<span style="position:absolute;left:141.27px;top:416.00px;line-height:15px;white-space:pre;font:italic bold 11.3px/15px 'Liberation Sans', sans-serif;color:#548af7;letter-spacing:0.167px;">php</span>
<span style="position:absolute;left:166.05px;top:412.00px;line-height:23px;white-space:pre;font:normal normal 17.4px/23px 'Liberation Sans', sans-serif;color:#dfe1e5;letter-spacing:0.362px;-webkit-text-stroke:0.27px;">homepage-main.php</span>
<span style="position:absolute;left:141.27px;top:447.00px;line-height:15px;white-space:pre;font:italic bold 11.3px/15px 'Liberation Sans', sans-serif;color:#548af7;letter-spacing:0.167px;">php</span>
<span style="position:absolute;left:166.05px;top:443.00px;line-height:23px;white-space:pre;font:normal normal 17.4px/23px 'Liberation Sans', sans-serif;color:#dfe1e5;letter-spacing:0.423px;-webkit-text-stroke:0.27px;">homepage-marketing.php</span>
<span style="position:absolute;left:141.27px;top:479.00px;line-height:15px;white-space:pre;font:italic bold 11.3px/15px 'Liberation Sans', sans-serif;color:#548af7;letter-spacing:0.167px;">php</span>
<span style="position:absolute;left:166.05px;top:474.00px;line-height:23px;white-space:pre;font:normal normal 17.4px/23px 'Liberation Sans', sans-serif;color:#dfe1e5;letter-spacing:0.426px;-webkit-text-stroke:0.27px;">marketing-casestudies.php</span>
<span style="position:absolute;left:141.27px;top:510.00px;line-height:15px;white-space:pre;font:italic bold 11.3px/15px 'Liberation Sans', sans-serif;color:#548af7;letter-spacing:0.167px;">php</span>
<span style="position:absolute;left:166.05px;top:506.00px;line-height:23px;white-space:pre;font:normal normal 17.4px/23px 'Liberation Sans', sans-serif;color:#dfe1e5;letter-spacing:0.322px;-webkit-text-stroke:0.27px;">singlepage.php</span>
<svg style="position:absolute;left:117px;top:537px;overflow:visible;" width="22" height="22" viewBox="0 0 22 22" fill="none"><g transform="translate(0.2 0.16)"><g stroke="#ced0d6" stroke-width="1.5"><circle cx="10" cy="10" r="8.6" fill="#43454a"/><path d="M4.1 15.4 L15.9 4.6" fill="none"/></g></g></svg>
<span style="position:absolute;left:141.65px;top:537.00px;line-height:23px;white-space:pre;font:normal normal 17.4px/23px 'Liberation Sans', sans-serif;color:#dfe1e5;letter-spacing:0.415px;-webkit-text-stroke:0.27px;">.gitignore</span>
<span style="position:absolute;left:116.57px;top:572.00px;line-height:15px;white-space:pre;font:italic bold 11.3px/15px 'Liberation Sans', sans-serif;color:#548af7;letter-spacing:0.167px;">php</span>
<span style="position:absolute;left:141.65px;top:568.00px;line-height:23px;white-space:pre;font:normal normal 17.4px/23px 'Liberation Sans', sans-serif;color:#dfe1e5;letter-spacing:0.674px;-webkit-text-stroke:0.27px;">404.php</span>
<span style="position:absolute;left:116.57px;top:603.00px;line-height:15px;white-space:pre;font:italic bold 11.3px/15px 'Liberation Sans', sans-serif;color:#548af7;letter-spacing:0.167px;">php</span>
<span style="position:absolute;left:141.65px;top:599.00px;line-height:23px;white-space:pre;font:normal normal 17.4px/23px 'Liberation Sans', sans-serif;color:#dfe1e5;letter-spacing:0.379px;-webkit-text-stroke:0.27px;">archive.php</span>
<svg style="position:absolute;left:117px;top:631px;overflow:visible;" width="22" height="21" viewBox="0 0 22 21" fill="none"><g transform="translate(0.5 0.705)"><g stroke="#b68bf0" stroke-width="1.6" fill="none" stroke-linecap="round" stroke-linejoin="round"><path d="M8.5 1.4 C5.9 1.4 5 2.4 5 4.2 V6.6 C5 8 4.1 8.9 1.9 8.9 C4.1 8.9 5 9.8 5 11.2 V13.6 C5 15.4 5.9 16.4 8.5 16.4"/><path d="M10.9 1.4 C13.5 1.4 14.4 2.4 14.4 4.2 V6.6 C14.4 8 15.3 8.9 17.5 8.9 C15.3 8.9 14.4 9.8 14.4 11.2 V13.6 C14.4 15.4 13.5 16.4 10.9 16.4"/></g></g></svg>
<span style="position:absolute;left:141.65px;top:630.00px;line-height:23px;white-space:pre;font:normal normal 17.4px/23px 'Liberation Sans', sans-serif;color:#dfe1e5;letter-spacing:0.389px;-webkit-text-stroke:0.27px;">composer.json</span>
<span style="position:absolute;left:116.57px;top:665.00px;line-height:15px;white-space:pre;font:italic bold 11.3px/15px 'Liberation Sans', sans-serif;color:#548af7;letter-spacing:0.167px;">php</span>
<span style="position:absolute;left:141.65px;top:661.00px;line-height:23px;white-space:pre;font:normal normal 17.4px/23px 'Liberation Sans', sans-serif;color:#dfe1e5;letter-spacing:0.663px;-webkit-text-stroke:0.27px;">footer.php</span>
<span style="position:absolute;left:116.57px;top:696.00px;line-height:15px;white-space:pre;font:italic bold 11.3px/15px 'Liberation Sans', sans-serif;color:#548af7;letter-spacing:0.167px;">php</span>
<span style="position:absolute;left:141.65px;top:692.00px;line-height:23px;white-space:pre;font:normal normal 17.4px/23px 'Liberation Sans', sans-serif;color:#dfe1e5;letter-spacing:0.619px;-webkit-text-stroke:0.27px;">front-page.php</span>
<span style="position:absolute;left:116.57px;top:727.00px;line-height:15px;white-space:pre;font:italic bold 11.3px/15px 'Liberation Sans', sans-serif;color:#548af7;letter-spacing:0.167px;">php</span>
<span style="position:absolute;left:141.65px;top:723.00px;line-height:23px;white-space:pre;font:normal normal 17.4px/23px 'Liberation Sans', sans-serif;color:#dfe1e5;letter-spacing:0.457px;-webkit-text-stroke:0.27px;">functions.php</span>
<span style="position:absolute;left:116.57px;top:759.00px;line-height:15px;white-space:pre;font:italic bold 11.3px/15px 'Liberation Sans', sans-serif;color:#548af7;letter-spacing:0.167px;">php</span>
<span style="position:absolute;left:141.65px;top:755.00px;line-height:23px;white-space:pre;font:normal normal 17.4px/23px 'Liberation Sans', sans-serif;color:#dfe1e5;letter-spacing:0.445px;-webkit-text-stroke:0.27px;">header.php</span>
<svg style="position:absolute;left:119px;top:788px;overflow:visible;" width="18" height="18" viewBox="0 0 18 18" fill="none"><g transform="translate(0 0.28)"><path d="M0.8 1.6 H15.6 M0.8 5.9 H11.4 M0.8 10.2 H15.6 M0.8 14.4 H10.4" stroke="#ced0d6" stroke-width="1.3" stroke-linecap="round"/></g></svg>
<span style="position:absolute;left:141.65px;top:786.00px;line-height:23px;white-space:pre;font:normal normal 17.4px/23px 'Liberation Sans', sans-serif;color:#dfe1e5;letter-spacing:-0.647px;-webkit-text-stroke:0.27px;">LICENSE</span>
<span style="position:absolute;left:116.94px;top:819.00px;line-height:17px;white-space:pre;font:normal bold 13.2px/17px 'Liberation Sans', sans-serif;color:#548af7;transform:scaleX(1.2);transform-origin:0 0;">M</span>
<svg style="position:absolute;left:129px;top:821px;overflow:visible;" width="12" height="14" viewBox="0 0 12 14" fill="none"><g transform="translate(0.4 0.995)"><path d="M5 1.4 V9.4 M2.3 6.8 L5 9.6 L7.7 6.8" stroke="#548af7" stroke-width="1.9" stroke-linecap="round" stroke-linejoin="round" fill="none"/></g></svg>
<span style="position:absolute;left:141.65px;top:817.00px;line-height:23px;white-space:pre;font:normal normal 17.4px/23px 'Liberation Sans', sans-serif;color:#dfe1e5;letter-spacing:-0.502px;-webkit-text-stroke:0.27px;">README.md</span>
<svg style="position:absolute;left:119px;top:850px;overflow:visible;" width="18" height="18" viewBox="0 0 18 18" fill="none"><g transform="translate(0 0.51)"><path d="M0.8 1.6 H15.6 M0.8 5.9 H11.4 M0.8 10.2 H15.6 M0.8 14.4 H10.4" stroke="#ced0d6" stroke-width="1.3" stroke-linecap="round"/></g></svg>
<span style="position:absolute;left:141.65px;top:848.00px;line-height:23px;white-space:pre;font:normal normal 17.4px/23px 'Liberation Sans', sans-serif;color:#dfe1e5;letter-spacing:0.454px;-webkit-text-stroke:0.27px;">readme.txt</span>
<svg style="position:absolute;left:118px;top:880px;overflow:visible;" width="20" height="21" viewBox="0 0 20 21" fill="none"><g transform="translate(0 0.625)"><g stroke="#548af7" stroke-width="1.4" fill="none" stroke-linejoin="round"><rect x="1.7" y="1.9" width="14.6" height="14.6" rx="2.4" fill="#25324d"/><circle cx="11.6" cy="6.4" r="1.7"/><path d="M1.9 9.4 L5.2 6.8 L15.6 16"/></g></g></svg>
<span style="position:absolute;left:141.65px;top:879.00px;line-height:23px;white-space:pre;font:normal normal 17.4px/23px 'Liberation Sans', sans-serif;color:#dfe1e5;letter-spacing:0.369px;-webkit-text-stroke:0.27px;">screenshot.png</span>
<span style="position:absolute;left:116.57px;top:914.00px;line-height:15px;white-space:pre;font:italic bold 11.3px/15px 'Liberation Sans', sans-serif;color:#548af7;letter-spacing:0.167px;">php</span>
<span style="position:absolute;left:141.65px;top:910.00px;line-height:23px;white-space:pre;font:normal normal 17.4px/23px 'Liberation Sans', sans-serif;color:#dfe1e5;letter-spacing:0.290px;-webkit-text-stroke:0.27px;">single.php</span>
<svg style="position:absolute;left:118px;top:942px;overflow:visible;" width="19" height="21" viewBox="0 0 19 21" fill="none"><g transform="translate(0.0 0.455)"><path d="M1 0.8 H17 L15.6 16 L9 18.4 L2.4 16 Z" fill="#548af7"/><path d="M5 4.6 H13 L12.7 8.4 H6.2 M12.7 8.4 L12.3 12.8 L9 14 L5.8 12.8 L5.7 11.4" stroke="#ffffff" stroke-width="1.7" fill="none"/></g></svg>
<span style="position:absolute;left:141.65px;top:941.00px;line-height:23px;white-space:pre;font:normal normal 17.4px/23px 'Liberation Sans', sans-serif;color:#dfe1e5;letter-spacing:0.345px;-webkit-text-stroke:0.27px;">style.css</span>
<div style="position:absolute;left:545.8px;top:187.8px;width:10.3px;height:800px;background:#595b5e;border-radius:5.2px;"></div>
<div style="position:absolute;left:0;top:296px;width:1884px;height:675px;overflow:hidden;"><div style="position:absolute;left:0;top:-296px;width:1920px;height:971px;">
<div style="position:absolute;left:562px;top:647.24px;width:1322px;height:28.52px;background:#26282e;"></div>
<div style="position:absolute;left:655px;top:296px;width:1px;height:675px;background:#313438;"></div>
<div style="position:absolute;left:696px;top:296px;width:1px;height:675px;background:#313438;"></div>
<div style="position:absolute;left:737px;top:296px;width:1px;height:675px;background:#313438;"></div>
<div style="position:absolute;left:777px;top:296px;width:1px;height:675px;background:#313438;"></div>
<div style="position:absolute;left:817px;top:296px;width:1px;height:675px;background:#313438;"></div>
<div style="position:absolute;left:858px;top:296px;width:1px;height:675px;background:#313438;"></div>
<div style="position:absolute;left:898px;top:296px;width:1px;height:675px;background:#313438;"></div>
<div style="position:absolute;left:939px;top:296px;width:1px;height:675px;background:#313438;"></div>
<div style="position:absolute;left:979px;top:296px;width:1px;height:675px;background:#313438;"></div>
<div style="position:absolute;left:1019px;top:362.04px;width:1px;height:171.12px;background:#313438;"></div>
<div style="position:absolute;left:1060px;top:390.56px;width:1px;height:114.08px;background:#313438;"></div>
<div style="position:absolute;left:1100px;top:447.6px;width:1px;height:28.52px;background:#313438;"></div>
<div style="position:absolute;left:1019px;top:618.72px;width:1px;height:171.12px;background:#313438;"></div>
<div style="position:absolute;left:1060px;top:647.24px;width:1px;height:114.08px;background:#313438;"></div>
<div style="position:absolute;left:1100px;top:704.28px;width:1px;height:28.52px;background:#313438;"></div>
<div style="position:absolute;left:1019px;top:875.4px;width:1px;height:142.6px;background:#313438;"></div>
<div style="position:absolute;left:1060px;top:903.92px;width:1px;height:114.08px;background:#313438;"></div>
<div style="position:absolute;left:1100px;top:960.96px;width:1px;height:28.52px;background:#313438;"></div>
<div style="position:absolute;left:631px;top:296px;width:3.3px;height:322.72px;background:#8aec95;"></div>
<div style="position:absolute;left:631px;top:618.72px;width:3.3px;height:28.52px;background:#efe97c;"></div>
<div style="position:absolute;left:631px;top:647.24px;width:3.3px;height:28.52px;background:#ef858b;"></div>
<div style="position:absolute;left:631px;top:675.76px;width:3.3px;height:114.08px;background:#efe97c;"></div>
<div style="position:absolute;left:631px;top:789.8399999999999px;width:3.3px;height:181.16000000000008px;background:#8aec95;"></div>
<div style="position:absolute;left:1023.2px;top:276.48px;width:151.5px;height:28.52px;background:#2b2d30;"></div>
<div style="position:absolute;left:0;top:297.9px;width:1884px;height:20px;overflow:hidden;"><div style="position:absolute;left:0;top:-297.9px;width:1884px;height:971px;">
<div style="position:absolute;left:1023.2px;top:276.48px;width:151.5px;height:28.52px;background:#2b2d30;"></div>
<div class="code" style="position:absolute;left:1023.20px;top:278.00px;height:28.52px;white-space:pre;-webkit-text-stroke:0.3px;font:17.6px/28.52px 'Liberation Mono', monospace;letter-spacing:-0.462px;"><span style="color:#cf8e6d">&lt;?php</span><span style="color:#bcbec4"> </span><span style="color:#cf8e6d">endif</span><span style="color:#bcbec4">; </span><span style="color:#cf8e6d">?&gt;</span></div>
</div></div>
<div style="position:absolute;left:540px;width:60.30px;top:308.00px;height:28.52px;text-align:right;white-space:pre;font:normal 15.8px/29.72px 'Liberation Mono', monospace;color:#4b5059;-webkit-text-stroke:0.15px;">143</div>
<div style="position:absolute;left:1023.2px;top:333.52px;width:414.1px;height:28.52px;background:#2b2d30;"></div>
<svg style="position:absolute;left:1123px;top:356px;overflow:visible;" width="94" height="6" viewBox="0 0 94 6" fill="none"><g transform="translate(0.0 0.42)"><path d="M0 1.0 L3.10 3.1 L6.20 1.0 L9.30 3.1 L12.40 1.0 L15.50 3.1 L18.60 1.0 L21.70 3.1 L24.80 1.0 L27.90 3.1 L31.00 1.0 L34.10 3.1 L37.20 1.0 L40.30 3.1 L43.40 1.0 L46.50 3.1 L49.60 1.0 L52.70 3.1 L55.80 1.0 L58.90 3.1 L62.00 1.0 L65.10 3.1 L68.20 1.0 L71.30 3.1 L74.40 1.0 L77.50 3.1 L80.60 1.0 L83.70 3.1 L86.80 1.0 L89.90 3.1 L93.00 1.0" stroke="#cfa53e" stroke-width="1.05" fill="none" stroke-linejoin="miter"/></g></svg>
<div class="code" style="position:absolute;left:1023.20px;top:335.00px;height:28.52px;white-space:pre;-webkit-text-stroke:0.3px;font:17.6px/28.52px 'Liberation Mono', monospace;letter-spacing:-0.462px;"><span style="color:#cf8e6d">&lt;?php</span><span style="color:#bcbec4"> </span><span style="color:#cf8e6d">if</span><span style="color:#bcbec4"> (</span><span style="color:#56a8f5">get_field</span><span style="color:#bcbec4">(</span><span style="color:#6aab73">&#x27;design_tools&#x27;</span><span style="color:#bcbec4">))</span><span style="color:#bcbec4"> : </span><span style="color:#cf8e6d">?&gt;</span></div>
<div style="position:absolute;left:540px;width:60.30px;top:336.00px;height:28.52px;text-align:right;white-space:pre;font:normal 15.8px/29.72px 'Liberation Mono', monospace;color:#4b5059;-webkit-text-stroke:0.15px;">144</div>
<div class="code" style="position:absolute;left:1063.60px;top:364.00px;height:28.52px;white-space:pre;-webkit-text-stroke:0.3px;font:17.6px/28.52px 'Liberation Mono', monospace;letter-spacing:-0.462px;"><span style="color:#d5b778">&lt;div</span><span style="color:#bcbec4"> class</span><span style="color:#6aab73">=&quot;single-post-meta-block&quot;</span><span style="color:#d5b778">&gt;</span></div>
<div style="position:absolute;left:540px;width:60.30px;top:365.00px;height:28.52px;text-align:right;white-space:pre;font:normal 15.8px/29.72px 'Liberation Mono', monospace;color:#4b5059;-webkit-text-stroke:0.15px;">145</div>
<div class="code" style="position:absolute;left:1104.00px;top:392.00px;height:28.52px;white-space:pre;-webkit-text-stroke:0.3px;font:17.6px/28.52px 'Liberation Mono', monospace;letter-spacing:-0.462px;"><span style="color:#d5b778">&lt;div</span><span style="color:#bcbec4"> class</span><span style="color:#6aab73">=&quot;single-post-meta-block-label&quot;</span><span style="color:#d5b778">&gt;</span><span style="color:#bcbec4">Design Tools</span><span style="color:#d5b778">&lt;/div&gt;</span></div>
<div style="position:absolute;left:540px;width:60.30px;top:393.00px;height:28.52px;text-align:right;white-space:pre;font:normal 15.8px/29.72px 'Liberation Mono', monospace;color:#4b5059;-webkit-text-stroke:0.15px;">146</div>
<div class="code" style="position:absolute;left:1104.00px;top:421.00px;height:28.52px;white-space:pre;-webkit-text-stroke:0.3px;font:17.6px/28.52px 'Liberation Mono', monospace;letter-spacing:-0.462px;"><span style="color:#d5b778">&lt;div</span><span style="color:#bcbec4"> class</span><span style="color:#6aab73">=&quot;single-post-meta-block-value&quot;</span><span style="color:#d5b778">&gt;</span></div>
<div style="position:absolute;left:540px;width:60.30px;top:422.00px;height:28.52px;text-align:right;white-space:pre;font:normal 15.8px/29.72px 'Liberation Mono', monospace;color:#4b5059;-webkit-text-stroke:0.15px;">147</div>
<div style="position:absolute;left:1174.7px;top:447.6px;width:353.5px;height:28.52px;background:#2b2d30;"></div>
<svg style="position:absolute;left:1234px;top:470px;overflow:visible;" width="94" height="6" viewBox="0 0 94 6" fill="none"><g transform="translate(0.1 0.5)"><path d="M0 1.0 L3.10 3.1 L6.20 1.0 L9.30 3.1 L12.40 1.0 L15.50 3.1 L18.60 1.0 L21.70 3.1 L24.80 1.0 L27.90 3.1 L31.00 1.0 L34.10 3.1 L37.20 1.0 L40.30 3.1 L43.40 1.0 L46.50 3.1 L49.60 1.0 L52.70 3.1 L55.80 1.0 L58.90 3.1 L62.00 1.0 L65.10 3.1 L68.20 1.0 L71.30 3.1 L74.40 1.0 L77.50 3.1 L80.60 1.0 L83.70 3.1 L86.80 1.0 L89.90 3.1 L93.00 1.0" stroke="#cfa53e" stroke-width="1.05" fill="none" stroke-linejoin="miter"/></g></svg>
<div class="code" style="position:absolute;left:1144.40px;top:449.00px;height:28.52px;white-space:pre;-webkit-text-stroke:0.3px;font:17.6px/28.52px 'Liberation Mono', monospace;letter-spacing:-0.462px;"><span style="color:#d5b778">&lt;p&gt;</span><span style="color:#cf8e6d">&lt;?php</span><span style="color:#bcbec4"> </span><span style="color:#56a8f5">the_field</span><span style="color:#bcbec4">(</span><span style="color:#6aab73">&#x27;design_tools&#x27;</span><span style="color:#bcbec4">)</span><span style="color:#bcbec4">; </span><span style="color:#cf8e6d">?&gt;</span><span style="color:#d5b778">&lt;/p&gt;</span></div>
<div style="position:absolute;left:540px;width:60.30px;top:450.00px;height:28.52px;text-align:right;white-space:pre;font:normal 15.8px/29.72px 'Liberation Mono', monospace;color:#4b5059;-webkit-text-stroke:0.15px;">148</div>
<div class="code" style="position:absolute;left:1104.00px;top:478.00px;height:28.52px;white-space:pre;-webkit-text-stroke:0.3px;font:17.6px/28.52px 'Liberation Mono', monospace;letter-spacing:-0.462px;"><span style="color:#d5b778">&lt;/div&gt;</span></div>
<div style="position:absolute;left:540px;width:60.30px;top:479.00px;height:28.52px;text-align:right;white-space:pre;font:normal 15.8px/29.72px 'Liberation Mono', monospace;color:#4b5059;-webkit-text-stroke:0.15px;">149</div>
<div class="code" style="position:absolute;left:1063.60px;top:506.00px;height:28.52px;white-space:pre;-webkit-text-stroke:0.3px;font:17.6px/28.52px 'Liberation Mono', monospace;letter-spacing:-0.462px;"><span style="color:#d5b778">&lt;/div&gt;</span></div>
<div style="position:absolute;left:540px;width:60.30px;top:507.00px;height:28.52px;text-align:right;white-space:pre;font:normal 15.8px/29.72px 'Liberation Mono', monospace;color:#4b5059;-webkit-text-stroke:0.15px;">150</div>
<div style="position:absolute;left:1023.2px;top:533.16px;width:151.5px;height:28.52px;background:#2b2d30;"></div>
<div class="code" style="position:absolute;left:1023.20px;top:535.00px;height:28.52px;white-space:pre;-webkit-text-stroke:0.3px;font:17.6px/28.52px 'Liberation Mono', monospace;letter-spacing:-0.462px;"><span style="color:#cf8e6d">&lt;?php</span><span style="color:#bcbec4"> </span><span style="color:#cf8e6d">endif</span><span style="color:#bcbec4">; </span><span style="color:#cf8e6d">?&gt;</span></div>
<div style="position:absolute;left:540px;width:60.30px;top:536.00px;height:28.52px;text-align:right;white-space:pre;font:normal 15.8px/29.72px 'Liberation Mono', monospace;color:#4b5059;-webkit-text-stroke:0.15px;">151</div>
<div style="position:absolute;left:540px;width:60.30px;top:564.00px;height:28.52px;text-align:right;white-space:pre;font:normal 15.8px/29.72px 'Liberation Mono', monospace;color:#4b5059;-webkit-text-stroke:0.15px;">152</div>
<div style="position:absolute;left:1023.2px;top:590.2px;width:383.8px;height:28.52px;background:#2b2d30;"></div>
<svg style="position:absolute;left:1123px;top:613px;overflow:visible;" width="94" height="6" viewBox="0 0 94 6" fill="none"><g transform="translate(0.0 0.1)"><path d="M0 1.0 L3.10 3.1 L6.20 1.0 L9.30 3.1 L12.40 1.0 L15.50 3.1 L18.60 1.0 L21.70 3.1 L24.80 1.0 L27.90 3.1 L31.00 1.0 L34.10 3.1 L37.20 1.0 L40.30 3.1 L43.40 1.0 L46.50 3.1 L49.60 1.0 L52.70 3.1 L55.80 1.0 L58.90 3.1 L62.00 1.0 L65.10 3.1 L68.20 1.0 L71.30 3.1 L74.40 1.0 L77.50 3.1 L80.60 1.0 L83.70 3.1 L86.80 1.0 L89.90 3.1 L93.00 1.0" stroke="#cfa53e" stroke-width="1.05" fill="none" stroke-linejoin="miter"/></g></svg>
<div class="code" style="position:absolute;left:1023.20px;top:592.00px;height:28.52px;white-space:pre;-webkit-text-stroke:0.3px;font:17.6px/28.52px 'Liberation Mono', monospace;letter-spacing:-0.462px;"><span style="color:#cf8e6d">&lt;?php</span><span style="color:#bcbec4"> </span><span style="color:#cf8e6d">if</span><span style="color:#bcbec4"> (</span><span style="color:#56a8f5">get_field</span><span style="color:#bcbec4">(</span><span style="color:#6aab73">&#x27;dev_tools&#x27;</span><span style="color:#bcbec4">))</span><span style="color:#bcbec4"> : </span><span style="color:#cf8e6d">?&gt;</span></div>
<div style="position:absolute;left:540px;width:60.30px;top:593.00px;height:28.52px;text-align:right;white-space:pre;font:normal 15.8px/29.72px 'Liberation Mono', monospace;color:#4b5059;-webkit-text-stroke:0.15px;">153</div>
<div style="position:absolute;left:1063.6px;top:618.72px;width:40.4px;height:28.52px;background:#3a3a22;"></div>
<div class="code" style="position:absolute;left:1063.60px;top:620.00px;height:28.52px;white-space:pre;-webkit-text-stroke:0.3px;font:17.6px/28.52px 'Liberation Mono', monospace;letter-spacing:-0.462px;"><span style="color:#d5b778">&lt;div</span><span style="color:#bcbec4"> class</span><span style="color:#6aab73">=&quot;single-post-meta-block&quot;</span><span style="color:#d5b778">&gt;</span></div>
<div style="position:absolute;left:540px;width:60.30px;top:621.00px;height:28.52px;text-align:right;white-space:pre;font:normal 15.8px/29.72px 'Liberation Mono', monospace;color:#4b5059;-webkit-text-stroke:0.15px;">154</div>
<div style="position:absolute;left:1104.0px;top:647.24px;width:40.4px;height:28.52px;background:#391f22;"></div>
<div style="position:absolute;left:1619.1px;top:647.24px;width:60.6px;height:28.52px;background:#391f22;"></div>
<div class="code" style="position:absolute;left:1104.00px;top:649.00px;height:28.52px;white-space:pre;-webkit-text-stroke:0.3px;font:17.6px/28.52px 'Liberation Mono', monospace;letter-spacing:-0.462px;"><span style="color:#d5b778">&lt;div</span><span style="color:#bcbec4"> class</span><span style="color:#6aab73">=&quot;single-post-meta-block-label&quot;</span><span style="color:#d5b778">&gt;</span><span style="color:#bcbec4">Dev Tools</span><span style="color:#d5b778">&lt;/div&gt;</span></div>
<div style="position:absolute;left:540px;width:60.30px;top:650.00px;height:28.52px;text-align:right;white-space:pre;font:normal 15.8px/29.72px 'Liberation Mono', monospace;color:#d3d5d9;-webkit-text-stroke:0.35px;">155</div>
<div class="code" style="position:absolute;left:1104.00px;top:677.00px;height:28.52px;white-space:pre;-webkit-text-stroke:0.3px;font:17.6px/28.52px 'Liberation Mono', monospace;letter-spacing:-0.462px;"><span style="color:#d5b778">&lt;div</span><span style="color:#bcbec4"> class</span><span style="color:#6aab73">=&quot;single-post-meta-block-value&quot;</span><span style="color:#d5b778">&gt;</span></div>
<div style="position:absolute;left:540px;width:60.30px;top:678.00px;height:28.52px;text-align:right;white-space:pre;font:normal 15.8px/29.72px 'Liberation Mono', monospace;color:#4b5059;-webkit-text-stroke:0.15px;">156</div>
<div style="position:absolute;left:1174.7px;top:704.28px;width:323.2px;height:28.52px;background:#2b2d30;"></div>
<svg style="position:absolute;left:1234px;top:727px;overflow:visible;" width="94" height="6" viewBox="0 0 94 6" fill="none"><g transform="translate(0.1 0.18)"><path d="M0 1.0 L3.10 3.1 L6.20 1.0 L9.30 3.1 L12.40 1.0 L15.50 3.1 L18.60 1.0 L21.70 3.1 L24.80 1.0 L27.90 3.1 L31.00 1.0 L34.10 3.1 L37.20 1.0 L40.30 3.1 L43.40 1.0 L46.50 3.1 L49.60 1.0 L52.70 3.1 L55.80 1.0 L58.90 3.1 L62.00 1.0 L65.10 3.1 L68.20 1.0 L71.30 3.1 L74.40 1.0 L77.50 3.1 L80.60 1.0 L83.70 3.1 L86.80 1.0 L89.90 3.1 L93.00 1.0" stroke="#cfa53e" stroke-width="1.05" fill="none" stroke-linejoin="miter"/></g></svg>
<div class="code" style="position:absolute;left:1144.40px;top:706.00px;height:28.52px;white-space:pre;-webkit-text-stroke:0.3px;font:17.6px/28.52px 'Liberation Mono', monospace;letter-spacing:-0.462px;"><span style="color:#d5b778">&lt;p&gt;</span><span style="color:#cf8e6d">&lt;?php</span><span style="color:#bcbec4"> </span><span style="color:#56a8f5">the_field</span><span style="color:#bcbec4">(</span><span style="color:#6aab73">&#x27;dev_tools&#x27;</span><span style="color:#bcbec4">)</span><span style="color:#bcbec4">; </span><span style="color:#cf8e6d">?&gt;</span><span style="color:#d5b778">&lt;/p&gt;</span></div>
<div style="position:absolute;left:540px;width:60.30px;top:707.00px;height:28.52px;text-align:right;white-space:pre;font:normal 15.8px/29.72px 'Liberation Mono', monospace;color:#4b5059;-webkit-text-stroke:0.15px;">157</div>
<div class="code" style="position:absolute;left:1104.00px;top:734.00px;height:28.52px;white-space:pre;-webkit-text-stroke:0.3px;font:17.6px/28.52px 'Liberation Mono', monospace;letter-spacing:-0.462px;"><span style="color:#d5b778">&lt;/div&gt;</span></div>
<div style="position:absolute;left:540px;width:60.30px;top:735.00px;height:28.52px;text-align:right;white-space:pre;font:normal 15.8px/29.72px 'Liberation Mono', monospace;color:#4b5059;-webkit-text-stroke:0.15px;">158</div>
<div style="position:absolute;left:1063.6px;top:761.32px;width:60.6px;height:28.52px;background:#3a3a22;"></div>
<div class="code" style="position:absolute;left:1063.60px;top:763.00px;height:28.52px;white-space:pre;-webkit-text-stroke:0.3px;font:17.6px/28.52px 'Liberation Mono', monospace;letter-spacing:-0.462px;"><span style="color:#d5b778">&lt;/div&gt;</span></div>
<div style="position:absolute;left:540px;width:60.30px;top:764.00px;height:28.52px;text-align:right;white-space:pre;font:normal 15.8px/29.72px 'Liberation Mono', monospace;color:#4b5059;-webkit-text-stroke:0.15px;">159</div>
<div style="position:absolute;left:1023.2px;top:789.84px;width:151.5px;height:28.52px;background:#2b2d30;"></div>
<div class="code" style="position:absolute;left:1023.20px;top:791.00px;height:28.52px;white-space:pre;-webkit-text-stroke:0.3px;font:17.6px/28.52px 'Liberation Mono', monospace;letter-spacing:-0.462px;"><span style="color:#cf8e6d">&lt;?php</span><span style="color:#bcbec4"> </span><span style="color:#cf8e6d">endif</span><span style="color:#bcbec4">; </span><span style="color:#cf8e6d">?&gt;</span></div>
<div style="position:absolute;left:540px;width:60.30px;top:792.00px;height:28.52px;text-align:right;white-space:pre;font:normal 15.8px/29.72px 'Liberation Mono', monospace;color:#4b5059;-webkit-text-stroke:0.15px;">160</div>
<div style="position:absolute;left:540px;width:60.30px;top:821.00px;height:28.52px;text-align:right;white-space:pre;font:normal 15.8px/29.72px 'Liberation Mono', monospace;color:#4b5059;-webkit-text-stroke:0.15px;">161</div>
<div style="position:absolute;left:1023.2px;top:846.88px;width:454.5px;height:28.52px;background:#2b2d30;"></div>
<svg style="position:absolute;left:1123px;top:869px;overflow:visible;" width="94" height="7" viewBox="0 0 94 7" fill="none"><g transform="translate(0.0 0.78)"><path d="M0 1.0 L3.10 3.1 L6.20 1.0 L9.30 3.1 L12.40 1.0 L15.50 3.1 L18.60 1.0 L21.70 3.1 L24.80 1.0 L27.90 3.1 L31.00 1.0 L34.10 3.1 L37.20 1.0 L40.30 3.1 L43.40 1.0 L46.50 3.1 L49.60 1.0 L52.70 3.1 L55.80 1.0 L58.90 3.1 L62.00 1.0 L65.10 3.1 L68.20 1.0 L71.30 3.1 L74.40 1.0 L77.50 3.1 L80.60 1.0 L83.70 3.1 L86.80 1.0 L89.90 3.1 L93.00 1.0" stroke="#cfa53e" stroke-width="1.05" fill="none" stroke-linejoin="miter"/></g></svg>
<div class="code" style="position:absolute;left:1023.20px;top:849.00px;height:28.52px;white-space:pre;-webkit-text-stroke:0.3px;font:17.6px/28.52px 'Liberation Mono', monospace;letter-spacing:-0.462px;"><span style="color:#cf8e6d">&lt;?php</span><span style="color:#bcbec4"> </span><span style="color:#cf8e6d">if</span><span style="color:#bcbec4"> (</span><span style="color:#56a8f5">get_field</span><span style="color:#bcbec4">(</span><span style="color:#6aab73">&#x27;project_timeline&#x27;</span><span style="color:#bcbec4">))</span><span style="color:#bcbec4"> : </span><span style="color:#cf8e6d">?&gt;</span></div>
<div style="position:absolute;left:540px;width:60.30px;top:850.00px;height:28.52px;text-align:right;white-space:pre;font:normal 15.8px/29.72px 'Liberation Mono', monospace;color:#4b5059;-webkit-text-stroke:0.15px;">162</div>
<div class="code" style="position:absolute;left:1063.60px;top:877.00px;height:28.52px;white-space:pre;-webkit-text-stroke:0.3px;font:17.6px/28.52px 'Liberation Mono', monospace;letter-spacing:-0.462px;"><span style="color:#d5b778">&lt;div</span><span style="color:#bcbec4"> class</span><span style="color:#6aab73">=&quot;single-post-meta-block&quot;</span><span style="color:#d5b778">&gt;</span></div>
<div style="position:absolute;left:540px;width:60.30px;top:878.00px;height:28.52px;text-align:right;white-space:pre;font:normal 15.8px/29.72px 'Liberation Mono', monospace;color:#4b5059;-webkit-text-stroke:0.15px;">163</div>
<div class="code" style="position:absolute;left:1104.00px;top:906.00px;height:28.52px;white-space:pre;-webkit-text-stroke:0.3px;font:17.6px/28.52px 'Liberation Mono', monospace;letter-spacing:-0.462px;"><span style="color:#d5b778">&lt;div</span><span style="color:#bcbec4"> class</span><span style="color:#6aab73">=&quot;single-post-meta-block-label&quot;</span><span style="color:#d5b778">&gt;</span><span style="color:#bcbec4">Project Timeline</span><span style="color:#d5b778">&lt;/div&gt;</span></div>
<div style="position:absolute;left:540px;width:60.30px;top:907.00px;height:28.52px;text-align:right;white-space:pre;font:normal 15.8px/29.72px 'Liberation Mono', monospace;color:#4b5059;-webkit-text-stroke:0.15px;">164</div>
<div class="code" style="position:absolute;left:1104.00px;top:934.00px;height:28.52px;white-space:pre;-webkit-text-stroke:0.3px;font:17.6px/28.52px 'Liberation Mono', monospace;letter-spacing:-0.462px;"><span style="color:#d5b778">&lt;div</span><span style="color:#bcbec4"> class</span><span style="color:#6aab73">=&quot;single-post-meta-block-value&quot;</span><span style="color:#d5b778">&gt;</span></div>
<div style="position:absolute;left:540px;width:60.30px;top:935.00px;height:28.52px;text-align:right;white-space:pre;font:normal 15.8px/29.72px 'Liberation Mono', monospace;color:#4b5059;-webkit-text-stroke:0.15px;">165</div>
<div style="position:absolute;left:1174.7px;top:960.96px;width:393.9px;height:28.52px;background:#2b2d30;"></div>
<svg style="position:absolute;left:1234px;top:983px;overflow:visible;" width="94" height="7" viewBox="0 0 94 7" fill="none"><g transform="translate(0.1 0.86)"><path d="M0 1.0 L3.10 3.1 L6.20 1.0 L9.30 3.1 L12.40 1.0 L15.50 3.1 L18.60 1.0 L21.70 3.1 L24.80 1.0 L27.90 3.1 L31.00 1.0 L34.10 3.1 L37.20 1.0 L40.30 3.1 L43.40 1.0 L46.50 3.1 L49.60 1.0 L52.70 3.1 L55.80 1.0 L58.90 3.1 L62.00 1.0 L65.10 3.1 L68.20 1.0 L71.30 3.1 L74.40 1.0 L77.50 3.1 L80.60 1.0 L83.70 3.1 L86.80 1.0 L89.90 3.1 L93.00 1.0" stroke="#cfa53e" stroke-width="1.05" fill="none" stroke-linejoin="miter"/></g></svg>
<div class="code" style="position:absolute;left:1144.40px;top:963.00px;height:28.52px;white-space:pre;-webkit-text-stroke:0.3px;font:17.6px/28.52px 'Liberation Mono', monospace;letter-spacing:-0.462px;"><span style="color:#d5b778">&lt;p&gt;</span><span style="color:#cf8e6d">&lt;?php</span><span style="color:#bcbec4"> </span><span style="color:#56a8f5">the_field</span><span style="color:#bcbec4">(</span><span style="color:#6aab73">&#x27;project_timeline&#x27;</span><span style="color:#bcbec4">)</span><span style="color:#bcbec4">; </span><span style="color:#cf8e6d">?&gt;</span><span style="color:#d5b778">&lt;/p&gt;</span></div>
<div style="position:absolute;left:540px;width:60.30px;top:964.00px;height:28.52px;text-align:right;white-space:pre;font:normal 15.8px/29.72px 'Liberation Mono', monospace;color:#4b5059;-webkit-text-stroke:0.15px;">166</div>
<svg style="position:absolute;left:669px;top:650px;overflow:visible;" width="18" height="24" viewBox="0 0 18 24" fill="none"><g transform="translate(0.5 0.6)"><path d="M7.6 0.7 C3.9 0.7 1.1 3.6 1.1 7.2 C1.1 9.4 2.2 11 3.3 12.2 C3.9 12.9 4.1 13.6 4.1 14.6 H11.1 C11.1 13.6 11.3 12.9 11.9 12.2 C13 11 14.1 9.4 14.1 7.2 C14.1 3.6 11.3 0.7 7.6 0.7 Z" fill="#f2c55c"/><path d="M4.7 16.65 H10.6 M5.2 19.25 H10.1" stroke="#dfe1e5" stroke-width="1.4" stroke-linecap="round"/></g></svg>
</div></div>
<div style="position:absolute;left:560px;top:152.7px;width:1324px;height:143px;background:#1e1f22;"></div>
<div style="position:absolute;left:562px;top:295.9px;width:1322px;height:1.2px;background:#3e4045;"></div>
<div class="code" style="position:absolute;left:700.00px;top:155.00px;height:28.52px;white-space:pre;-webkit-text-stroke:0.3px;font:17.6px/28.52px 'Liberation Mono', monospace;letter-spacing:-0.462px;"><span style="color:#d5b778">&lt;main</span><span style="color:#bcbec4"> id</span><span style="color:#6aab73">=&quot;main&quot;</span><span style="color:#bcbec4"> class</span><span style="color:#6aab73">=&quot;site-main&quot;</span><span style="color:#d5b778">&gt;</span></div>
<div style="position:absolute;left:540px;width:60.30px;top:156.00px;height:28.52px;text-align:right;white-space:pre;font:normal 15.8px/29.72px 'Liberation Mono', monospace;color:#636871;-webkit-text-stroke:0.15px;">11</div>
<div class="code" style="position:absolute;left:740.40px;top:183.00px;height:28.52px;white-space:pre;-webkit-text-stroke:0.3px;font:17.6px/28.52px 'Liberation Mono', monospace;letter-spacing:-0.462px;"><span style="color:#d5b778">&lt;section</span><span style="color:#bcbec4"> class</span><span style="color:#6aab73">=&quot;single-post-wrapper&quot;</span><span style="color:#d5b778">&gt;</span></div>
<div style="position:absolute;left:540px;width:60.30px;top:184.00px;height:28.52px;text-align:right;white-space:pre;font:normal 15.8px/29.72px 'Liberation Mono', monospace;color:#636871;-webkit-text-stroke:0.15px;">17</div>
<div class="code" style="position:absolute;left:780.80px;top:212.00px;height:28.52px;white-space:pre;-webkit-text-stroke:0.3px;font:17.6px/28.52px 'Liberation Mono', monospace;letter-spacing:-0.462px;"><span style="color:#d5b778">&lt;div</span><span style="color:#bcbec4"> class</span><span style="color:#6aab73">=&quot;single-post-wrapper-container&quot;</span><span style="color:#d5b778">&gt;</span></div>
<div style="position:absolute;left:540px;width:60.30px;top:213.00px;height:28.52px;text-align:right;white-space:pre;font:normal 15.8px/29.72px 'Liberation Mono', monospace;color:#636871;-webkit-text-stroke:0.15px;">18</div>
<div class="code" style="position:absolute;left:821.20px;top:240.00px;height:28.52px;white-space:pre;-webkit-text-stroke:0.3px;font:17.6px/28.52px 'Liberation Mono', monospace;letter-spacing:-0.462px;"><span style="color:#d5b778">&lt;section</span><span style="color:#bcbec4"> class</span><span style="color:#6aab73">=&quot;single-post-top-row&quot;</span><span style="color:#d5b778">&gt;</span></div>
<div style="position:absolute;left:540px;width:60.30px;top:241.00px;height:28.52px;text-align:right;white-space:pre;font:normal 15.8px/29.72px 'Liberation Mono', monospace;color:#636871;-webkit-text-stroke:0.15px;">33</div>
<div style="position:absolute;left:861.6px;top:267.55px;width:40.4px;height:28.52px;background:#38203d;"></div>
<div class="code" style="position:absolute;left:861.60px;top:268.00px;height:28.52px;white-space:pre;-webkit-text-stroke:0.3px;font:17.6px/28.52px 'Liberation Mono', monospace;letter-spacing:-0.462px;"><span style="color:#d5b778">&lt;div</span><span style="color:#bcbec4"> class</span><span style="color:#6aab73">=&quot;single-post-top-row-container container&quot;</span><span style="color:#d5b778">&gt;</span></div>
<div style="position:absolute;left:540px;width:60.30px;top:269.00px;height:28.52px;text-align:right;white-space:pre;font:normal 15.8px/29.72px 'Liberation Mono', monospace;color:#636871;-webkit-text-stroke:0.15px;">34</div>
<div style="position:absolute;left:1873px;top:297px;width:1.3px;height:674px;background:#45474c;"></div>
<div style="position:absolute;left:1865px;top:199.4px;width:18px;height:3.2px;background:#d4a840;"></div>
<div style="position:absolute;left:1865px;top:207.1px;width:18px;height:3.1px;background:#d4a840;"></div>
<div style="position:absolute;left:1865px;top:254px;width:18px;height:3.2px;background:#d4a840;"></div>
<div style="position:absolute;left:1865px;top:286.4px;width:18px;height:3.0px;background:#d4a840;"></div>
<div style="position:absolute;left:1865px;top:291.6px;width:18px;height:5.6px;background:#d4a840;"></div>
<div style="position:absolute;left:1865px;top:301px;width:18px;height:5.2px;background:#d4a840;"></div>
<div style="position:absolute;left:1865px;top:333px;width:18px;height:3.1px;background:#d4a840;"></div>
<div style="position:absolute;left:1865px;top:343.3px;width:18px;height:3.1px;background:#d4a840;"></div>
<div style="position:absolute;left:1865px;top:348.7px;width:18px;height:3.1px;background:#d4a840;"></div>
<div style="position:absolute;left:1865px;top:352.8px;width:18px;height:3.1px;background:#d4a840;"></div>
<div style="position:absolute;left:1865px;top:370.9px;width:18px;height:7.7px;background:#d4a840;"></div>
<div style="position:absolute;left:1865px;top:392.6px;width:18px;height:5.3px;background:#d4a840;"></div>
<div style="position:absolute;left:1865px;top:422.3px;width:18px;height:3.2px;background:#d4a840;"></div>
<div style="position:absolute;left:1865px;top:434.1px;width:18px;height:5.6px;background:#d4a840;"></div>
<div style="position:absolute;left:1865px;top:449.8px;width:18px;height:5.7px;background:#d4a840;"></div>
<div style="position:absolute;left:1865px;top:471.7px;width:18px;height:3.2px;background:#d4a840;"></div>
<div style="position:absolute;left:1865px;top:482.2px;width:18px;height:3.1px;background:#d4a840;"></div>
<div style="position:absolute;left:1865px;top:496.6px;width:18px;height:3.2px;background:#d4a840;"></div>
<div style="position:absolute;left:1865px;top:506.9px;width:18px;height:3.2px;background:#d4a840;"></div>
<div style="position:absolute;left:1865px;top:521px;width:18px;height:3.2px;background:#d4a840;"></div>
<div style="position:absolute;left:1865px;top:531.4px;width:18px;height:3.1px;background:#d4a840;"></div>
<div style="position:absolute;left:1865px;top:550.8px;width:18px;height:3.2px;background:#d4a840;"></div>
<div style="position:absolute;left:1865px;top:561.4px;width:18px;height:3.1px;background:#d4a840;"></div>
<div style="position:absolute;left:1865px;top:575.7px;width:18px;height:3.1px;background:#d4a840;"></div>
<div style="position:absolute;left:1865px;top:586px;width:18px;height:3px;background:#d4a840;"></div>
<div style="position:absolute;left:1865px;top:600px;width:18px;height:3.2px;background:#d4a840;"></div>
<div style="position:absolute;left:1865px;top:610.5px;width:18px;height:3.1px;background:#d4a840;"></div>
<div style="position:absolute;left:1865px;top:623.7px;width:18px;height:3.1px;background:#d4a840;"></div>
<div style="position:absolute;left:1865px;top:634.9px;width:18px;height:3.3px;background:#d4a840;"></div>
<div style="position:absolute;left:1865px;top:689.6px;width:18px;height:3.3px;background:#d4a840;"></div>
<div style="position:absolute;left:1865px;top:714.2px;width:18px;height:3.1px;background:#d4a840;"></div>
<div style="position:absolute;left:1865px;top:736.6px;width:18px;height:3.1px;background:#d4a840;"></div>
<div style="position:absolute;left:1865px;top:762px;width:18px;height:3.1px;background:#d4a840;"></div>
<div style="position:absolute;left:1865px;top:784.4px;width:18px;height:3.3px;background:#d4a840;"></div>
<div style="position:absolute;left:1865px;top:820.5px;width:18px;height:3.1px;background:#d4a840;"></div>
<div style="position:absolute;left:1865px;top:877.7px;width:18px;height:3.3px;background:#d4a840;"></div>
<div style="position:absolute;left:1865px;top:887.9px;width:18px;height:3.1px;background:#d4a840;"></div>
<div style="position:absolute;left:1865px;top:912.7px;width:18px;height:3.1px;background:#d4a840;"></div>
<div style="position:absolute;left:1865px;top:929.6px;width:18px;height:5.7px;background:#d4a840;"></div>
<div style="position:absolute;left:1865px;top:937.2px;width:18px;height:3.0px;background:#d4a840;"></div>
<div style="position:absolute;left:1865px;top:945.1px;width:18px;height:3.3px;background:#d4a840;"></div>
<div style="position:absolute;left:1865px;top:959.5px;width:18px;height:3.5px;background:#d4a840;"></div>
<div style="position:absolute;left:1869px;top:562px;width:10px;height:74.5px;background:rgba(150,152,158,.40);border-radius:5px;"></div>
<svg style="position:absolute;left:1743px;top:160px;overflow:visible;" width="20" height="19" viewBox="0 0 20 19" fill="none"><g transform="translate(0 0)"><path d="M9.5 1.9 C10.2 1.9 10.8 2.3 11.1 2.9 L17.2 14 C17.9 15.3 17 16.7 15.6 16.7 H3.4 C2 16.7 1.1 15.3 1.8 14 L7.9 2.9 C8.2 2.3 8.8 1.9 9.5 1.9 Z" fill="#d6ae58"/><path d="M9.5 6 V10.8" stroke="#1e1f22" stroke-width="1.9" stroke-linecap="round"/><circle cx="9.5" cy="13.7" r="1.15" fill="#1e1f22"/></g></svg>
<span style="position:absolute;left:1764.30px;top:160.00px;line-height:20px;white-space:pre;font:normal normal 15.2px/20px 'Liberation Sans', sans-serif;color:#bcbec4;letter-spacing:0.355px;-webkit-text-stroke:0.27px;">60</span>
<svg style="position:absolute;left:1790px;top:161px;overflow:visible;" width="21" height="20" viewBox="0 0 21 20" fill="none"><g transform="translate(0 0)"><path d="M3.2 8.6 L7.6 12.4 L16.6 2.6" stroke="#5fad65" stroke-width="2.2" stroke-linecap="round" stroke-linejoin="round"/><path d="M2.6 17 L5 15.2 L7.4 17 L9.8 15.2 L12.2 17 L14.6 15.2 L16.6 16.6" stroke="#5fad65" stroke-width="1.1" fill="none"/></g></svg>
<span style="position:absolute;left:1812.20px;top:160.00px;line-height:20px;white-space:pre;font:normal normal 15.2px/20px 'Liberation Sans', sans-serif;color:#bcbec4;-webkit-text-stroke:0.27px;">3</span>
<svg style="position:absolute;left:1834px;top:166px;overflow:visible;" width="13" height="9" viewBox="0 0 13 9" fill="none"><g transform="translate(0.4 0.55)"><path d="M1 5.9 L5.8 1 L10.6 5.9" stroke="#ced0d6" stroke-width="1.45" stroke-linecap="round" stroke-linejoin="round"/></g></svg>
<svg style="position:absolute;left:1861px;top:166px;overflow:visible;" width="14" height="9" viewBox="0 0 14 9" fill="none"><g transform="translate(0.6 0.35)"><path d="M1 1 L5.9 5.9 L10.8 1" stroke="#ced0d6" stroke-width="1.45" stroke-linecap="round" stroke-linejoin="round"/></g></svg>
</div></body></html>
